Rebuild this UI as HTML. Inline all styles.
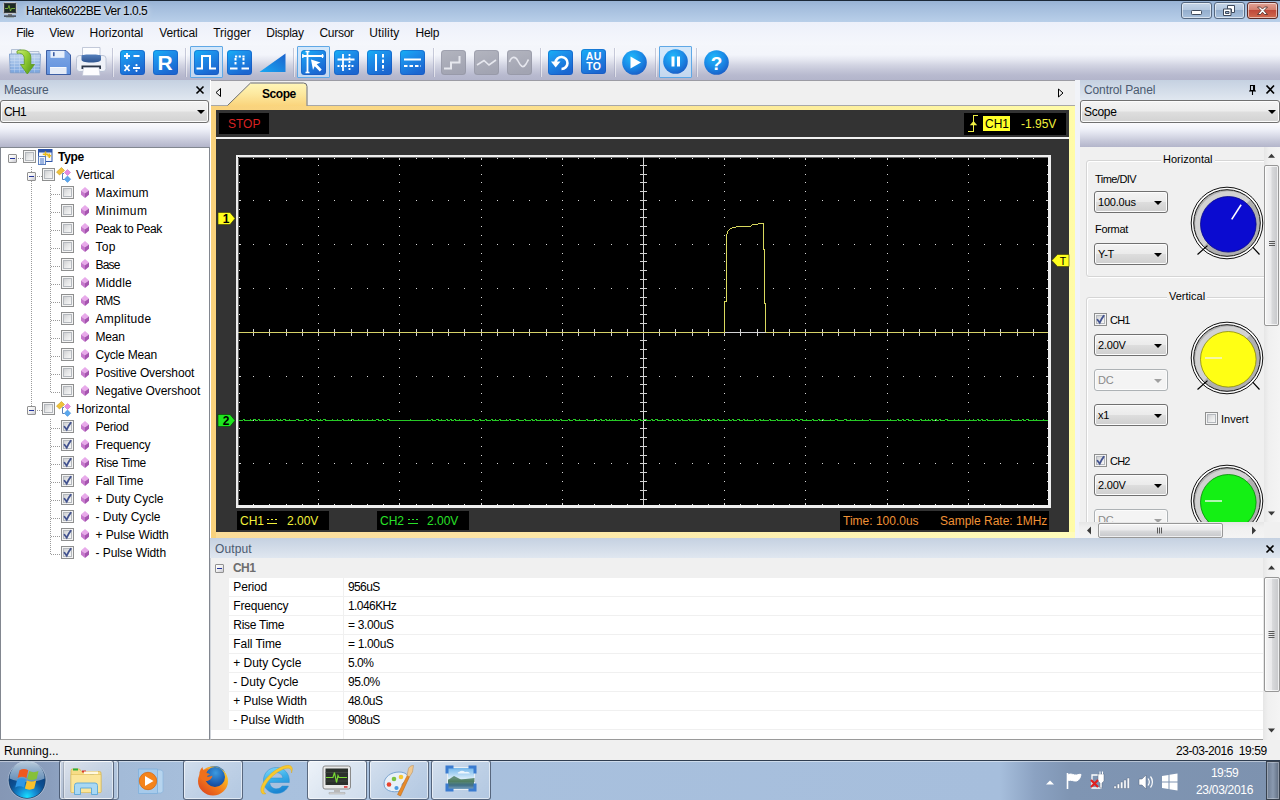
<!DOCTYPE html>
<html lang="en">
<head>
<meta charset="utf-8">
<title>Hantek6022BE Ver 1.0.5</title>
<style>
*{box-sizing:border-box;margin:0;padding:0}
html,body{width:1280px;height:800px;overflow:hidden;background:#f0f0f0}
body{font-family:"Liberation Sans",sans-serif;font-size:12px;color:#000;position:relative}
.abs{position:absolute}
svg{position:absolute;overflow:visible}
/* title bar */
#titlebar{left:0;top:0;width:1280px;height:22px;background:linear-gradient(#98b3d5 0,#a2bcdc 25%,#b9cfe9 100%);border-top:1px solid #1b2838}
#title{left:26px;top:4px;letter-spacing:-0.491px;font-size:12px;line-height:15px;color:#000;text-shadow:0 0 7px rgba(255,255,255,.9),0 0 4px rgba(255,255,255,.6);white-space:nowrap}
.wbtn{top:2px;height:17px;border:1px solid #55677f;border-radius:3px;box-shadow:inset 0 0 0 1px rgba(255,255,255,.55)}
/* menu */
#menubar{left:0;top:22px;width:1280px;height:23px;background:linear-gradient(#edf0fa,#f5f7fc)}
.mi{top:26px;font-size:12px;line-height:15px;white-space:nowrap;color:#0a0a0a}
/* toolbar */
#toolbar{left:0;top:45px;width:1280px;height:35px;background:linear-gradient(#f4f6fb 0,#f3f5fb 28%,#e4e6f0 43%,#d3d5e3 57%,#c4c6d8 72%,#b8bacf 86%,#b3b5cb 100%)}
.tsep{top:48px;width:2px;height:29px;border-left:1px solid rgba(160,164,190,.55);border-right:1px solid rgba(255,255,255,.55)}
.tsel{top:46px;width:33px;height:32px;border:1px solid #5fa8e6;background:rgba(200,225,250,.75);border-radius:1px}
/* panels */
.phead{height:20px;background:linear-gradient(#c5d1e1,#e0e7f0);color:#4b5a70;font-size:12px;line-height:20px;padding-left:4px;white-space:nowrap}
.combo{height:23px;border:1px solid #707070;border-radius:3px;background:linear-gradient(#f4f4f4 0,#ececec 48%,#dedede 52%,#d2d2d2 100%);box-shadow:inset 0 0 0 1px #fcfcfc;font-size:12px;line-height:22px;padding-left:3px}
.combo:after{content:"";position:absolute;right:3px;top:9px;border:4px solid transparent;border-top:4px solid #000;border-bottom:0}
.gstrip{height:24px;background:linear-gradient(#fbfbfe 0,#f0f2f9 25%,#dcdeea 50%,#c6c8d9 75%,#b3b5ca 100%)}
</style>
</head>
<body>
<svg width="0" height="0" style="left:0;top:0">
<defs>
<linearGradient id="gb" x1="0" y1="0" x2="0.55" y2="1"><stop offset="0" stop-color="#13b3f7"/><stop offset="0.35" stop-color="#1d92ec"/><stop offset="1" stop-color="#1b66d0"/></linearGradient>
<linearGradient id="gg" x1="0" y1="0" x2="0.3" y2="1"><stop offset="0" stop-color="#b3b5bf"/><stop offset="1" stop-color="#a2a4b2"/></linearGradient>
<radialGradient id="gorb" cx="0.4" cy="0.3" r="0.8"><stop offset="0" stop-color="#20b8fa"/><stop offset="0.5" stop-color="#1a8ce8"/><stop offset="1" stop-color="#1a55c0"/></radialGradient>
</defs>
</svg>
<!-- TITLE BAR -->
<div id="titlebar" class="abs"></div>
<svg class="abs" style="left:3px;top:2px" width="15" height="16" viewBox="0 0 15 16">
<rect x="0.5" y="0.5" width="13" height="11" rx="1" fill="#3a3f45" stroke="#c4c6c8"/>
<rect x="2" y="2" width="10" height="8" fill="#1d2a22"/>
<path d="M2 6.5 H5 L6 3.5 L7.5 9 L8.5 6.5 H12" stroke="#7ab536" stroke-width="0.9" fill="none"/>
<rect x="5" y="12" width="4" height="1.5" fill="#777"/>
<rect x="1" y="13.5" width="12" height="1.2" fill="#2a2d33"/>
<rect x="3" y="15" width="8" height="0.8" fill="#9aa"/>
</svg>
<div id="title" class="abs">Hantek6022BE Ver 1.0.5</div>
<div class="abs wbtn" style="left:1181px;width:31px;background:linear-gradient(#c5d5e8 0,#b2c6de 45%,#94aecd 50%,#a8c0dc 100%)"></div>
<div class="abs wbtn" style="left:1214px;width:31px;background:linear-gradient(#c5d5e8 0,#b2c6de 45%,#94aecd 50%,#a8c0dc 100%)"></div>
<div class="abs wbtn" style="left:1247px;width:31px;border-color:#5b2a26;background:linear-gradient(#e2a497 0,#d27f6e 45%,#c0493a 50%,#cf6a4f 100%)"></div>
<svg class="abs" style="left:1181px;top:2px" width="97" height="17" viewBox="0 0 97 17">
<rect x="10.500" y="8.500" width="10" height="4" rx="0.800" fill="#fff" stroke="#3f4a5c" stroke-width="1"/>
<g fill="#fff" stroke="#3f4a5c" stroke-width="1"><path d="M46.500 3.500h7v7h-3v-3.500h-4z"/><path d="M42.500 7h7.500v6.500h-7.500z M44.500 9.500v2h3.500v-2z" fill-rule="evenodd"/></g>
<path d="M76.500 5h3l2 2.100 2-2.100h3l-3.500 3.600 3.500 3.900h-3l-2-2.300-2 2.300h-3l3.500-3.900z" fill="#fff" stroke="#4a2520" stroke-width="0.800"/>
</svg>
<!-- MENU BAR -->
<div id="menubar" class="abs"></div>
<div class="abs mi" id="m1" style="left:16.25px;letter-spacing:-0.461px">File</div>
<div class="abs mi" id="m2" style="left:49.25px;letter-spacing:-0.324px">View</div>
<div class="abs mi" id="m3" style="left:89.50px;letter-spacing:-0.028px">Horizontal</div>
<div class="abs mi" id="m4" style="left:159.25px;letter-spacing:-0.139px">Vertical</div>
<div class="abs mi" id="m5" style="left:213.25px;letter-spacing:-0.011px">Trigger</div>
<div class="abs mi" id="m6" style="left:266.25px;letter-spacing:-0.266px">Display</div>
<div class="abs mi" id="m7" style="left:319.50px;letter-spacing:-0.294px">Cursor</div>
<div class="abs mi" id="m8" style="left:369.25px;letter-spacing:0.129px">Utility</div>
<div class="abs mi" id="m9" style="left:415.50px;letter-spacing:-0.234px">Help</div>
<!-- TOOLBAR -->
<div id="toolbar" class="abs"></div>
<div class="abs tsep" style="left:112px"></div>
<div class="abs tsep" style="left:185px"></div>
<div class="abs tsep" style="left:293px"></div>
<div class="abs tsep" style="left:433px"></div>
<div class="abs tsep" style="left:540px"></div>
<div class="abs tsep" style="left:614px"></div>
<div class="abs tsep" style="left:655px"></div>
<div class="abs tsep" style="left:696px"></div>
<div class="abs tsel" style="left:190px"></div>
<div class="abs tsel" style="left:297px"></div>
<div class="abs tsel" style="left:659px"></div>
<!-- toolbar icons -->
<svg class="abs" style="left:8px;top:46px" width="34" height="32" viewBox="0 0 34 32">
<defs><linearGradient id="fo1" x1="0" y1="0" x2="0" y2="1"><stop offset="0" stop-color="#c4d7f0"/><stop offset="1" stop-color="#7aa5de"/></linearGradient>
<linearGradient id="ar1" x1="0" y1="0" x2="1" y2="0.6"><stop offset="0" stop-color="#d2ee7a"/><stop offset="0.5" stop-color="#96d036"/><stop offset="1" stop-color="#5c9e1a"/></linearGradient></defs>
<path d="M3.500 3.500h9.500l1.500 2h16.500v4h-27.500z" fill="#e6edf7" stroke="#a4b4cc" stroke-width="0.800"/>
<path d="M1.500 8h31l-0.800 18.800h-29.400z" fill="url(#fo1)" stroke="#7d9dcb" stroke-width="0.900"/>
<path d="M2 11.500h30M2 14.500h30M2 17.500h30M2 20.500h30M2 23.500h30M6.500 8.500v18M11.500 8.500v18M16.500 8.500v18M21.500 8.500v18M26.500 8.500v18" stroke="#dce8f8" stroke-width="0.500" opacity="0.650"/>
<path d="M9 5c7-2.600 13.500-0.500 13.800 6v7.500h3.700l-7.200 9.500-6.800-9.500h3.800v-6c0-4-3-6-7.300-5.200z" fill="url(#ar1)" stroke="#5f9a20" stroke-width="0.800"/>
</svg>
<svg class="abs" style="left:45px;top:49px" width="27" height="27" viewBox="0 0 27 27">
<defs><linearGradient id="sv1" x1="0" y1="0" x2="0" y2="1"><stop offset="0" stop-color="#7fa8e6"/><stop offset="1" stop-color="#5f8fdc"/></linearGradient></defs>
<path d="M1.500 1.500h19.500l4.500 4.500v19.500h-24z" fill="url(#sv1)" stroke="#3c5ea4" stroke-width="1"/>
<rect x="5.500" y="1.800" width="14" height="7" fill="#e8f0fb"/>
<rect x="8" y="3.200" width="1.600" height="4" fill="#3c5ea4"/>
<rect x="5" y="18" width="16.500" height="7" fill="#f5f8fd"/>
<path d="M5 20h16.500M5 22h16.500M5 24h16.500" stroke="#c9d5ea" stroke-width="0.7"/>
</svg>
<svg class="abs" style="left:75px;top:46px" width="33" height="31" viewBox="0 0 33 31">
<defs><linearGradient id="pr1" x1="0" y1="0" x2="0" y2="1"><stop offset="0" stop-color="#5580bd"/><stop offset="1" stop-color="#2f5590"/></linearGradient></defs>
<rect x="1.500" y="9.500" width="29.500" height="16" rx="3" fill="#eef1f8" stroke="#b7bfd2" stroke-width="0.900"/>
<path d="M7.500 1.500h17.500v10h-17.500z" fill="#fcfdff" stroke="#b4bccf" stroke-width="0.800"/>
<path d="M6.500 10c0-1 2-1.500 9.500-1.500s10 0.500 10 1.500v3.500c0 2-3 3-9.800 3s-9.700-1-9.700-3z" fill="url(#pr1)"/>
<path d="M6.500 19.500h19.500v3.500h-19.500z" fill="#2c3648"/>
<path d="M8.500 21.500h15.500l1 8h-17.500z" fill="#fdfdff" stroke="#c0c6d6" stroke-width="0.600"/>
</svg>
<!-- calc -->
<svg class="abs" style="left:120px;top:49.500px" width="25" height="25" viewBox="0 0 25 25">
<rect x="0" y="0" width="25" height="25" rx="3.500" fill="url(#gb)"/><rect x="0.500" y="0.500" width="24" height="24" rx="3" fill="none" stroke="#1750b4" stroke-opacity="0.45"/>
<path d="M4 6h6M7 3v6M13.500 6h6M4.500 15l5 6M9.500 15l-5 6M13 18h7" stroke="#fff" stroke-width="1.800" fill="none"/><circle cx="16.500" cy="15.200" r="1.100" fill="#fff"/><circle cx="16.500" cy="20.800" r="1.100" fill="#fff"/>
</svg>
<!-- R -->
<svg class="abs" style="left:153px;top:49.500px" width="25" height="25" viewBox="0 0 25 25">
<rect width="25" height="25" rx="3.500" fill="url(#gb)"/><rect x="0.500" y="0.500" width="24" height="24" rx="3" fill="none" stroke="#1750b4" stroke-opacity="0.45"/>
<text x="12" y="20.300" text-anchor="middle" font-family="Liberation Sans,sans-serif" font-weight="bold" font-size="21" fill="#fff">R</text>
</svg>
<!-- pulse -->
<svg class="abs" style="left:194px;top:49.500px" width="25" height="25" viewBox="0 0 25 25">
<rect width="25" height="25" rx="3.500" fill="url(#gb)"/><rect x="0.500" y="0.500" width="24" height="24" rx="3" fill="none" stroke="#1750b4" stroke-opacity="0.45"/>
<path d="M2.500 18.500h5.500v-12.500h8v12.500h6" stroke="#fff" stroke-width="2" fill="none"/>
</svg>
<!-- dotted pulse -->
<svg class="abs" style="left:227px;top:49.500px" width="25" height="25" viewBox="0 0 25 25">
<rect width="25" height="25" rx="3.500" fill="url(#gb)"/><rect x="0.500" y="0.500" width="24" height="24" rx="3" fill="none" stroke="#1750b4" stroke-opacity="0.45"/>
<path d="M8 6.500h10" stroke="#fff" stroke-width="2" stroke-dasharray="2.200 1.500" fill="none"/>
<path d="M8.500 8v8M16.500 8v8" stroke="#fff" stroke-width="2" stroke-dasharray="2.500 1.500" fill="none"/>
<path d="M3 18.500h7.500M14.500 18.500h7.500" stroke="#fff" stroke-width="2" fill="none"/>
</svg>
<!-- triangle -->
<svg class="abs" style="left:259px;top:49.500px" width="28" height="25" viewBox="0 0 28 25">
<defs><linearGradient id="tr1" x1="0" y1="1" x2="1" y2="0"><stop offset="0" stop-color="#18a8f4"/><stop offset="1" stop-color="#1b62cc"/></linearGradient></defs>
<path d="M0.500 22l26-18.500v18.500z" fill="url(#tr1)"/>
</svg>
<!-- cursor -->
<svg class="abs" style="left:301px;top:49.500px" width="25" height="25" viewBox="0 0 25 25">
<rect width="25" height="25" rx="3.500" fill="url(#gb)"/><rect x="0.500" y="0.500" width="24" height="24" rx="3" fill="none" stroke="#1750b4" stroke-opacity="0.45"/>
<path d="M6.500 1.500v21M1.500 6h21" stroke="#fff" stroke-width="1.800" fill="none"/><path d="M4.500 1.500h4M4.500 22.500h4M21.500 4v4M1.800 4v4" stroke="#fff" stroke-width="1.300"/>
<path d="M10 9.500l9.500 3-3.800 1.800 5 5.200-1.900 1.900-5.100-5.200-1.700 3.800z" fill="#fff"/>
</svg>
<!-- grid -->
<svg class="abs" style="left:334px;top:49.500px" width="25" height="25" viewBox="0 0 25 25">
<rect width="25" height="25" rx="3.500" fill="url(#gb)"/><rect x="0.500" y="0.500" width="24" height="24" rx="3" fill="none" stroke="#1750b4" stroke-opacity="0.45"/>
<path d="M9 4v17M3.500 9.500h17" stroke="#fff" stroke-width="1.800" fill="none"/>
<path d="M15.500 4v17M3.500 16h17" stroke="#fff" stroke-width="1.800" stroke-dasharray="2 1.500" fill="none"/>
</svg>
<!-- vertical cursors -->
<svg class="abs" style="left:367px;top:49.500px" width="25" height="25" viewBox="0 0 25 25">
<rect width="25" height="25" rx="3.500" fill="url(#gb)"/><rect x="0.500" y="0.500" width="24" height="24" rx="3" fill="none" stroke="#1750b4" stroke-opacity="0.45"/>
<path d="M9 4v17" stroke="#fff" stroke-width="2" fill="none"/>
<path d="M16 4v17" stroke="#fff" stroke-width="2" stroke-dasharray="3.500 2" fill="none"/>
</svg>
<!-- horizontal cursors -->
<svg class="abs" style="left:400px;top:49.500px" width="25" height="25" viewBox="0 0 25 25">
<rect width="25" height="25" rx="3.500" fill="url(#gb)"/><rect x="0.500" y="0.500" width="24" height="24" rx="3" fill="none" stroke="#1750b4" stroke-opacity="0.45"/>
<path d="M4 9.500h17" stroke="#fff" stroke-width="2" fill="none"/>
<path d="M4 16h17" stroke="#fff" stroke-width="2" stroke-dasharray="3.500 2" fill="none"/>
</svg>
<!-- gray step -->
<svg class="abs" style="left:441px;top:49.500px" width="25" height="25" viewBox="0 0 25 25">
<rect width="25" height="25" rx="3.500" fill="url(#gg)"/><rect x="0.500" y="0.500" width="24" height="24" rx="3" fill="none" stroke="#8d8fa0" stroke-opacity="0.5"/>
<path d="M3 18.500h7v-6h8.500v-6.500" stroke="#e6e7ee" stroke-width="2" fill="none"/>
</svg>
<svg class="abs" style="left:474px;top:49.500px" width="25" height="25" viewBox="0 0 25 25">
<rect width="25" height="25" rx="3.500" fill="url(#gg)"/><rect x="0.500" y="0.500" width="24" height="24" rx="3" fill="none" stroke="#8d8fa0" stroke-opacity="0.5"/>
<path d="M3 15l7-4.500 5 4.500 7-5" stroke="#e6e7ee" stroke-width="1.600" fill="none"/>
</svg>
<svg class="abs" style="left:507px;top:49.500px" width="25" height="25" viewBox="0 0 25 25">
<rect width="25" height="25" rx="3.500" fill="url(#gg)"/><rect x="0.500" y="0.500" width="24" height="24" rx="3" fill="none" stroke="#8d8fa0" stroke-opacity="0.5"/>
<path d="M2.500 12c2-6 6-6 8.500-1s5 8 8 3c1-1.500 1.500-3 2.500-4.500" stroke="#e6e7ee" stroke-width="1.600" fill="none"/>
</svg>
<!-- reset -->
<svg class="abs" style="left:548px;top:49.500px" width="25" height="25" viewBox="0 0 25 25">
<rect width="25" height="25" rx="3.500" fill="url(#gb)"/><rect x="0.500" y="0.500" width="24" height="24" rx="3" fill="none" stroke="#1750b4" stroke-opacity="0.45"/>
<path d="M7.500 12.500a6 6 0 1 1 6 6.500" stroke="#fff" stroke-width="2.600" fill="none"/><path d="M3 11.500h9.500l-4.800 6z" fill="#fff"/>
</svg>
<!-- AUTO -->
<svg class="abs" style="left:581px;top:49px" width="25" height="25" viewBox="0 0 25 25">
<rect width="25" height="25" rx="3.500" fill="url(#gb)"/><rect x="0.500" y="0.500" width="24" height="24" rx="3" fill="none" stroke="#1750b4" stroke-opacity="0.45"/>
<text x="12.800" y="11.200" text-anchor="middle" font-family="Liberation Sans,sans-serif" font-weight="bold" font-size="10.500" fill="#fff" letter-spacing="0.400">AU</text>
<text x="12.800" y="21" text-anchor="middle" font-family="Liberation Sans,sans-serif" font-weight="bold" font-size="10.500" fill="#fff" letter-spacing="0.400">TO</text>
</svg>
<!-- play -->
<svg class="abs" style="left:622px;top:49.500px" width="25" height="25" viewBox="0 0 25 25">
<circle cx="12.500" cy="12.500" r="12.300" fill="url(#gorb)"/><path d="M8.500 6.500l10.500 6-10.500 6z" fill="#fff"/>
</svg>
<!-- pause -->
<svg class="abs" style="left:663px;top:49px" width="25" height="25" viewBox="0 0 25 25">
<circle cx="12.500" cy="12.500" r="12.300" fill="url(#gorb)"/><path d="M8.500 7.500h3v10h-3zM14 7.500h3v10h-3z" fill="#fff"/>
</svg>
<!-- help -->
<svg class="abs" style="left:704px;top:49.500px" width="25" height="25" viewBox="0 0 25 25">
<circle cx="12.500" cy="12.500" r="12.300" fill="url(#gorb)"/>
<text x="12.500" y="19.500" text-anchor="middle" font-family="Liberation Sans,sans-serif" font-weight="bold" font-size="19" fill="#fff">?</text>
</svg>
<style>
.tl{font-size:12px;line-height:16px;white-space:nowrap;color:#000}
.xb{width:9px;height:9px;border:1px solid #919191;border-radius:1px;background:linear-gradient(135deg,#fff 0,#f0f0f0 50%,#c8c8d0 100%)}
.xb:after{content:"";position:absolute;left:1px;top:3px;width:5px;height:1px;background:#22339a}
.cb{width:13px;height:13px;border:1px solid #8e8f8f;background:#f4f4f4;padding:1px}
.cb:before{content:"";display:block;box-sizing:border-box;width:9px;height:9px;border:1px solid #b4b8bd;background:linear-gradient(135deg,#cfd0d2 0,#e4e5e6 45%,#f8f8f8 100%)}

</style>

<!-- LEFT PANEL -->
<div class="abs phead" style="left:0;top:80px;width:210px;letter-spacing:-0.341px">Measure</div>
<svg class="abs" style="left:195px;top:85px" width="10" height="10" viewBox="0 0 10 10"><path d="M1.500 1.500l7 7M8.500 1.500l-7 7" stroke="#000" stroke-width="1.600"/></svg>
<div class="abs combo" style="left:0;top:100px;width:209px;letter-spacing:-0.7px">CH1</div>
<div class="abs gstrip" style="left:0;top:123px;width:210px"></div>
<div class="abs" style="left:0;top:147px;width:210px;height:593px;background:#fff;border:1px solid #828790;border-bottom-color:#a0a0a0"></div>
<svg class="abs" style="left:0;top:0" width="210" height="740" viewBox="0 0 210 740" shape-rendering="crispEdges"><path d="M31.5 167V406" stroke="#9a9a9a" stroke-width="1" stroke-dasharray="1 1"/><path d="M50.5 185V393" stroke="#9a9a9a" stroke-width="1" stroke-dasharray="1 1"/><path d="M50.5 419V555" stroke="#9a9a9a" stroke-width="1" stroke-dasharray="1 1"/><path d="M18 158.5H23" stroke="#9a9a9a" stroke-width="1" stroke-dasharray="1 1"/><path d="M37 176.5H42" stroke="#9a9a9a" stroke-width="1" stroke-dasharray="1 1"/><path d="M51 194.5H61" stroke="#9a9a9a" stroke-width="1" stroke-dasharray="1 1"/><path d="M51 212.5H61" stroke="#9a9a9a" stroke-width="1" stroke-dasharray="1 1"/><path d="M51 230.5H61" stroke="#9a9a9a" stroke-width="1" stroke-dasharray="1 1"/><path d="M51 248.5H61" stroke="#9a9a9a" stroke-width="1" stroke-dasharray="1 1"/><path d="M51 266.5H61" stroke="#9a9a9a" stroke-width="1" stroke-dasharray="1 1"/><path d="M51 284.5H61" stroke="#9a9a9a" stroke-width="1" stroke-dasharray="1 1"/><path d="M51 302.5H61" stroke="#9a9a9a" stroke-width="1" stroke-dasharray="1 1"/><path d="M51 320.5H61" stroke="#9a9a9a" stroke-width="1" stroke-dasharray="1 1"/><path d="M51 338.5H61" stroke="#9a9a9a" stroke-width="1" stroke-dasharray="1 1"/><path d="M51 356.5H61" stroke="#9a9a9a" stroke-width="1" stroke-dasharray="1 1"/><path d="M51 374.5H61" stroke="#9a9a9a" stroke-width="1" stroke-dasharray="1 1"/><path d="M51 392.5H61" stroke="#9a9a9a" stroke-width="1" stroke-dasharray="1 1"/><path d="M37 410.5H42" stroke="#9a9a9a" stroke-width="1" stroke-dasharray="1 1"/><path d="M51 428.5H61" stroke="#9a9a9a" stroke-width="1" stroke-dasharray="1 1"/><path d="M51 446.5H61" stroke="#9a9a9a" stroke-width="1" stroke-dasharray="1 1"/><path d="M51 464.5H61" stroke="#9a9a9a" stroke-width="1" stroke-dasharray="1 1"/><path d="M51 482.5H61" stroke="#9a9a9a" stroke-width="1" stroke-dasharray="1 1"/><path d="M51 500.5H61" stroke="#9a9a9a" stroke-width="1" stroke-dasharray="1 1"/><path d="M51 518.5H61" stroke="#9a9a9a" stroke-width="1" stroke-dasharray="1 1"/><path d="M51 536.5H61" stroke="#9a9a9a" stroke-width="1" stroke-dasharray="1 1"/><path d="M51 554.5H61" stroke="#9a9a9a" stroke-width="1" stroke-dasharray="1 1"/></svg>
<div class="abs xb" style="left:8px;top:154px"></div>
<div class="abs cb" style="left:23px;top:150px"></div>
<svg class="abs" style="left:37px;top:149px" width="16" height="16" viewBox="0 0 16 16"><rect x="1.500" y="0.500" width="13.500" height="12" fill="#f4f6fb" stroke="#2f55a8" stroke-width="1"/><rect x="1.500" y="0.500" width="13.500" height="3" fill="#2f55a8"/><path d="M8.500 2.500v5.500M5.800 5.200h5.500M12.300 4.500v4.500M10.300 6.700h4" stroke="#e9b818" stroke-width="1.500"/><rect x="1.500" y="7.500" width="7" height="8" fill="#eef3fb" stroke="#5b7fc0" stroke-width="1"/><path d="M3 10h4M3 12h4M3 14h4" stroke="#4a76c8" stroke-width="1"/></svg>
<div class="abs tl" style="left:58px;top:149px;font-weight:bold;letter-spacing:-0.281px">Type</div>
<div class="abs xb" style="left:27px;top:172px"></div>
<div class="abs cb" style="left:42px;top:168px"></div>
<svg class="abs" style="left:56px;top:167px" width="16" height="16" viewBox="0 0 16 16"><path d="M0.500 5L5.500 0.500 8.500 3.500 3.500 8z" fill="#f0c23a" stroke="#c99a1a" stroke-width="0.600"/><path d="M8 6.500h-1.500v6h2" fill="none" stroke="#5a7fb5" stroke-width="1"/><path d="M11.500 2.500l3 3-3 3-3-3z" fill="#e68be0" stroke="#c060c0" stroke-width="0.500"/><path d="M11.500 9l3.200 3.200-3.200 3.200-3.200-3.200z" fill="#5aa8ee" stroke="#2f7fd0" stroke-width="0.500"/></svg>
<div class="abs tl" style="left:76px;top:167px;letter-spacing:-0.132px">Vertical</div>
<div class="abs cb" style="left:61px;top:186px"></div>
<svg class="abs" style="left:81px;top:187px" width="8" height="11" viewBox="0 0 8 11"><path d="M4 0L8 3.500 4 6.200 0 3.500z" fill="#e8aaea"/><path d="M0 3.500L4 6.200V11L0 7.800z" fill="#c678cc"/><path d="M8 3.500L4 6.200V11L8 7.800z" fill="#a655b0"/></svg>
<div class="abs tl" style="left:95.500px;top:185px;letter-spacing:0.183px">Maximum</div>
<div class="abs cb" style="left:61px;top:204px"></div>
<svg class="abs" style="left:81px;top:205px" width="8" height="11" viewBox="0 0 8 11"><path d="M4 0L8 3.500 4 6.200 0 3.500z" fill="#e8aaea"/><path d="M0 3.500L4 6.200V11L0 7.800z" fill="#c678cc"/><path d="M8 3.500L4 6.200V11L8 7.800z" fill="#a655b0"/></svg>
<div class="abs tl" style="left:95.500px;top:203px;letter-spacing:0.475px">Minimum</div>
<div class="abs cb" style="left:61px;top:222px"></div>
<svg class="abs" style="left:81px;top:223px" width="8" height="11" viewBox="0 0 8 11"><path d="M4 0L8 3.500 4 6.200 0 3.500z" fill="#e8aaea"/><path d="M0 3.500L4 6.200V11L0 7.800z" fill="#c678cc"/><path d="M8 3.500L4 6.200V11L8 7.800z" fill="#a655b0"/></svg>
<div class="abs tl" style="left:95.500px;top:221px;letter-spacing:-0.424px">Peak to Peak</div>
<div class="abs cb" style="left:61px;top:240px"></div>
<svg class="abs" style="left:81px;top:241px" width="8" height="11" viewBox="0 0 8 11"><path d="M4 0L8 3.500 4 6.200 0 3.500z" fill="#e8aaea"/><path d="M0 3.500L4 6.200V11L0 7.800z" fill="#c678cc"/><path d="M8 3.500L4 6.200V11L8 7.800z" fill="#a655b0"/></svg>
<div class="abs tl" style="left:95.500px;top:239px;letter-spacing:0.28px">Top</div>
<div class="abs cb" style="left:61px;top:258px"></div>
<svg class="abs" style="left:81px;top:259px" width="8" height="11" viewBox="0 0 8 11"><path d="M4 0L8 3.500 4 6.200 0 3.500z" fill="#e8aaea"/><path d="M0 3.500L4 6.200V11L0 7.800z" fill="#c678cc"/><path d="M8 3.500L4 6.200V11L8 7.800z" fill="#a655b0"/></svg>
<div class="abs tl" style="left:95.500px;top:257px;letter-spacing:-0.84px">Base</div>
<div class="abs cb" style="left:61px;top:276px"></div>
<svg class="abs" style="left:81px;top:277px" width="8" height="11" viewBox="0 0 8 11"><path d="M4 0L8 3.500 4 6.200 0 3.500z" fill="#e8aaea"/><path d="M0 3.500L4 6.200V11L0 7.800z" fill="#c678cc"/><path d="M8 3.500L4 6.200V11L8 7.800z" fill="#a655b0"/></svg>
<div class="abs tl" style="left:95.500px;top:275px;letter-spacing:0.173px">Middle</div>
<div class="abs cb" style="left:61px;top:294px"></div>
<svg class="abs" style="left:81px;top:295px" width="8" height="11" viewBox="0 0 8 11"><path d="M4 0L8 3.500 4 6.200 0 3.500z" fill="#e8aaea"/><path d="M0 3.500L4 6.200V11L0 7.800z" fill="#c678cc"/><path d="M8 3.500L4 6.200V11L8 7.800z" fill="#a655b0"/></svg>
<div class="abs tl" style="left:95.500px;top:293px;letter-spacing:-0.891px">RMS</div>
<div class="abs cb" style="left:61px;top:312px"></div>
<svg class="abs" style="left:81px;top:313px" width="8" height="11" viewBox="0 0 8 11"><path d="M4 0L8 3.500 4 6.200 0 3.500z" fill="#e8aaea"/><path d="M0 3.500L4 6.200V11L0 7.800z" fill="#c678cc"/><path d="M8 3.500L4 6.200V11L8 7.800z" fill="#a655b0"/></svg>
<div class="abs tl" style="left:95.500px;top:311px;letter-spacing:0.281px">Amplitude</div>
<div class="abs cb" style="left:61px;top:330px"></div>
<svg class="abs" style="left:81px;top:331px" width="8" height="11" viewBox="0 0 8 11"><path d="M4 0L8 3.500 4 6.200 0 3.500z" fill="#e8aaea"/><path d="M0 3.500L4 6.200V11L0 7.800z" fill="#c678cc"/><path d="M8 3.500L4 6.200V11L8 7.800z" fill="#a655b0"/></svg>
<div class="abs tl" style="left:95.500px;top:329px;letter-spacing:-0.183px">Mean</div>
<div class="abs cb" style="left:61px;top:348px"></div>
<svg class="abs" style="left:81px;top:349px" width="8" height="11" viewBox="0 0 8 11"><path d="M4 0L8 3.500 4 6.200 0 3.500z" fill="#e8aaea"/><path d="M0 3.500L4 6.200V11L0 7.800z" fill="#c678cc"/><path d="M8 3.500L4 6.200V11L8 7.800z" fill="#a655b0"/></svg>
<div class="abs tl" style="left:95.500px;top:347px;letter-spacing:-0.196px">Cycle Mean</div>
<div class="abs cb" style="left:61px;top:366px"></div>
<svg class="abs" style="left:81px;top:367px" width="8" height="11" viewBox="0 0 8 11"><path d="M4 0L8 3.500 4 6.200 0 3.500z" fill="#e8aaea"/><path d="M0 3.500L4 6.200V11L0 7.800z" fill="#c678cc"/><path d="M8 3.500L4 6.200V11L8 7.800z" fill="#a655b0"/></svg>
<div class="abs tl" style="left:95.500px;top:365px;letter-spacing:-0.107px">Positive Overshoot</div>
<div class="abs cb" style="left:61px;top:384px"></div>
<svg class="abs" style="left:81px;top:385px" width="8" height="11" viewBox="0 0 8 11"><path d="M4 0L8 3.500 4 6.200 0 3.500z" fill="#e8aaea"/><path d="M0 3.500L4 6.200V11L0 7.800z" fill="#c678cc"/><path d="M8 3.500L4 6.200V11L8 7.800z" fill="#a655b0"/></svg>
<div class="abs tl" style="left:95.500px;top:383px;letter-spacing:-0.076px">Negative Overshoot</div>
<div class="abs xb" style="left:27px;top:406px"></div>
<div class="abs cb" style="left:42px;top:402px"></div>
<svg class="abs" style="left:56px;top:401px" width="16" height="16" viewBox="0 0 16 16"><path d="M0.500 5L5.500 0.500 8.500 3.500 3.500 8z" fill="#f0c23a" stroke="#c99a1a" stroke-width="0.600"/><path d="M8 6.500h-1.500v6h2" fill="none" stroke="#5a7fb5" stroke-width="1"/><path d="M11.500 2.500l3 3-3 3-3-3z" fill="#e68be0" stroke="#c060c0" stroke-width="0.500"/><path d="M11.500 9l3.200 3.200-3.200 3.200-3.200-3.200z" fill="#5aa8ee" stroke="#2f7fd0" stroke-width="0.500"/></svg>
<div class="abs tl" style="left:76px;top:401px;letter-spacing:0.017px">Horizontal</div>
<div class="abs cb ck" style="left:61px;top:420px"></div>
<svg class="abs" style="left:61px;top:420px" width="13" height="13" viewBox="0 0 13 13"><path d="M3.500 6.800L5.700 9.700Q7.400 5.500 9.700 2.800" stroke="#43538f" stroke-width="1.800" fill="none" stroke-linecap="round"/></svg>
<svg class="abs" style="left:81px;top:421px" width="8" height="11" viewBox="0 0 8 11"><path d="M4 0L8 3.500 4 6.200 0 3.500z" fill="#e8aaea"/><path d="M0 3.500L4 6.200V11L0 7.800z" fill="#c678cc"/><path d="M8 3.500L4 6.200V11L8 7.800z" fill="#a655b0"/></svg>
<div class="abs tl" style="left:95.500px;top:419px;letter-spacing:-0.248px">Period</div>
<div class="abs cb ck" style="left:61px;top:438px"></div>
<svg class="abs" style="left:61px;top:438px" width="13" height="13" viewBox="0 0 13 13"><path d="M3.500 6.800L5.700 9.700Q7.400 5.500 9.700 2.800" stroke="#43538f" stroke-width="1.800" fill="none" stroke-linecap="round"/></svg>
<svg class="abs" style="left:81px;top:439px" width="8" height="11" viewBox="0 0 8 11"><path d="M4 0L8 3.500 4 6.200 0 3.500z" fill="#e8aaea"/><path d="M0 3.500L4 6.200V11L0 7.800z" fill="#c678cc"/><path d="M8 3.500L4 6.200V11L8 7.800z" fill="#a655b0"/></svg>
<div class="abs tl" style="left:95.500px;top:437px;letter-spacing:-0.2px">Frequency</div>
<div class="abs cb ck" style="left:61px;top:456px"></div>
<svg class="abs" style="left:61px;top:456px" width="13" height="13" viewBox="0 0 13 13"><path d="M3.500 6.800L5.700 9.700Q7.400 5.500 9.700 2.800" stroke="#43538f" stroke-width="1.800" fill="none" stroke-linecap="round"/></svg>
<svg class="abs" style="left:81px;top:457px" width="8" height="11" viewBox="0 0 8 11"><path d="M4 0L8 3.500 4 6.200 0 3.500z" fill="#e8aaea"/><path d="M0 3.500L4 6.200V11L0 7.800z" fill="#c678cc"/><path d="M8 3.500L4 6.200V11L8 7.800z" fill="#a655b0"/></svg>
<div class="abs tl" style="left:95.500px;top:455px;letter-spacing:-0.327px">Rise Time</div>
<div class="abs cb ck" style="left:61px;top:474px"></div>
<svg class="abs" style="left:61px;top:474px" width="13" height="13" viewBox="0 0 13 13"><path d="M3.500 6.800L5.700 9.700Q7.400 5.500 9.700 2.800" stroke="#43538f" stroke-width="1.800" fill="none" stroke-linecap="round"/></svg>
<svg class="abs" style="left:81px;top:475px" width="8" height="11" viewBox="0 0 8 11"><path d="M4 0L8 3.500 4 6.200 0 3.500z" fill="#e8aaea"/><path d="M0 3.500L4 6.200V11L0 7.800z" fill="#c678cc"/><path d="M8 3.500L4 6.200V11L8 7.800z" fill="#a655b0"/></svg>
<div class="abs tl" style="left:95.500px;top:473px;letter-spacing:-0.099px">Fall Time</div>
<div class="abs cb ck" style="left:61px;top:492px"></div>
<svg class="abs" style="left:61px;top:492px" width="13" height="13" viewBox="0 0 13 13"><path d="M3.500 6.800L5.700 9.700Q7.400 5.500 9.700 2.800" stroke="#43538f" stroke-width="1.800" fill="none" stroke-linecap="round"/></svg>
<svg class="abs" style="left:81px;top:493px" width="8" height="11" viewBox="0 0 8 11"><path d="M4 0L8 3.500 4 6.200 0 3.500z" fill="#e8aaea"/><path d="M0 3.500L4 6.200V11L0 7.800z" fill="#c678cc"/><path d="M8 3.500L4 6.200V11L8 7.800z" fill="#a655b0"/></svg>
<div class="abs tl" style="left:95.500px;top:491px;letter-spacing:-0.038px">+ Duty Cycle</div>
<div class="abs cb ck" style="left:61px;top:510px"></div>
<svg class="abs" style="left:61px;top:510px" width="13" height="13" viewBox="0 0 13 13"><path d="M3.500 6.800L5.700 9.700Q7.400 5.500 9.700 2.800" stroke="#43538f" stroke-width="1.800" fill="none" stroke-linecap="round"/></svg>
<svg class="abs" style="left:81px;top:511px" width="8" height="11" viewBox="0 0 8 11"><path d="M4 0L8 3.500 4 6.200 0 3.500z" fill="#e8aaea"/><path d="M0 3.500L4 6.200V11L0 7.800z" fill="#c678cc"/><path d="M8 3.500L4 6.200V11L8 7.800z" fill="#a655b0"/></svg>
<div class="abs tl" style="left:95.500px;top:509px;letter-spacing:-0.029px">- Duty Cycle</div>
<div class="abs cb ck" style="left:61px;top:528px"></div>
<svg class="abs" style="left:61px;top:528px" width="13" height="13" viewBox="0 0 13 13"><path d="M3.500 6.800L5.700 9.700Q7.400 5.500 9.700 2.800" stroke="#43538f" stroke-width="1.800" fill="none" stroke-linecap="round"/></svg>
<svg class="abs" style="left:81px;top:529px" width="8" height="11" viewBox="0 0 8 11"><path d="M4 0L8 3.500 4 6.200 0 3.500z" fill="#e8aaea"/><path d="M0 3.500L4 6.200V11L0 7.800z" fill="#c678cc"/><path d="M8 3.500L4 6.200V11L8 7.800z" fill="#a655b0"/></svg>
<div class="abs tl" style="left:95.500px;top:527px;letter-spacing:-0.098px">+ Pulse Width</div>
<div class="abs cb ck" style="left:61px;top:546px"></div>
<svg class="abs" style="left:61px;top:546px" width="13" height="13" viewBox="0 0 13 13"><path d="M3.500 6.800L5.700 9.700Q7.400 5.500 9.700 2.800" stroke="#43538f" stroke-width="1.800" fill="none" stroke-linecap="round"/></svg>
<svg class="abs" style="left:81px;top:547px" width="8" height="11" viewBox="0 0 8 11"><path d="M4 0L8 3.500 4 6.200 0 3.500z" fill="#e8aaea"/><path d="M0 3.500L4 6.200V11L0 7.800z" fill="#c678cc"/><path d="M8 3.500L4 6.200V11L8 7.800z" fill="#a655b0"/></svg>
<div class="abs tl" style="left:95.500px;top:545px;letter-spacing:-0.066px">- Pulse Width</div>
<style>.sbox{background:#000;font-size:12px;line-height:23px;white-space:nowrap}</style>
<!-- CENTER -->
<div class="abs" style="left:210px;top:80px;width:1px;height:460px;background:#fff"></div>
<div class="abs" style="left:211px;top:80px;width:864px;height:26px;background:#f0f0f0;border-top:1px solid #9c9ca4;border-bottom:1px solid #a8a8a8"></div>
<div class="abs" style="left:211px;top:106px;width:864px;height:432px;background:linear-gradient(to right,#f9d27c 0,#fbdc8a 30%,#fdee9c 70%,#fffca8 100%)"></div>
<div class="abs" style="left:216px;top:532px;width:859px;height:6px;background:rgba(255,255,255,.22)"></div>
<svg class="abs" style="left:211px;top:80px" width="120" height="27" viewBox="0 0 120 27">
<defs><linearGradient id="tabg" x1="0" y1="0" x2="0" y2="1"><stop offset="0" stop-color="#fff6b8"/><stop offset="0.45" stop-color="#fde9a0"/><stop offset="1" stop-color="#fad47c"/></linearGradient></defs>
<path d="M16 26L39.500 3.500H92.500Q95.500 3.500 95.500 6.500V26z" fill="url(#tabg)"/>
<path d="M16.500 25.500L39.500 3H92.500Q96 3 96 6.500V25.500" fill="none" stroke="#6e6e6a" stroke-width="1"/>
<path d="M9.500 8.500v8l-4.500-4z" fill="none" stroke="#000" stroke-width="1"/>
</svg>
<div class="abs" style="left:262px;top:87px;font-weight:bold;font-size:12px;line-height:15px;letter-spacing:-0.45px">Scope</div>
<svg class="abs" style="left:1055px;top:86px" width="12" height="14" viewBox="0 0 12 14"><path d="M3.500 3v8l4.500-4z" fill="none" stroke="#000" stroke-width="1"/></svg>
<div class="abs" style="left:216px;top:110px;width:853px;height:422px;background:#333"></div>
<div class="abs" style="left:216px;top:137px;width:853px;height:2px;background:#f2f2f2"></div>
<div class="abs sbox" style="left:219px;top:113px;width:50px;height:21px;color:#d82222;padding-left:9px">STOP</div>
<div class="abs sbox" style="left:964px;top:113px;width:102px;height:22px"></div>
<svg class="abs" style="left:966px;top:114px" width="14" height="19" viewBox="0 0 14 19"><path d="M2 17.500h5.500v-16h4.500" fill="none" stroke="#f0f044" stroke-width="1.100" shape-rendering="crispEdges"/><path d="M7.500 7l-3.700 4.300h7.400z" fill="#f0f044"/></svg>
<div class="abs" style="left:983px;top:116px;width:27px;height:15px;background:#ffff28;color:#000;font-size:12px;line-height:17px;padding-left:2px">CH1</div>
<div class="abs" style="left:1021px;top:117px;color:#f0f03c;font-size:12px;line-height:15px;white-space:nowrap">-1.95V</div>
<div class="abs" style="left:236px;top:155px;width:815px;height:353px;background:#000"></div>
<svg class="abs" style="left:0;top:0" width="1280" height="540" viewBox="0 0 1280 540" shape-rendering="crispEdges"><path d="M239 165h1v1h-1zM239 174h1v1h-1zM239 182h1v1h-1zM239 191h1v1h-1zM239 200h1v1h-1zM239 209h1v1h-1zM239 217h1v1h-1zM239 226h1v1h-1zM239 235h1v1h-1zM239 244h1v1h-1zM239 253h1v1h-1zM239 261h1v1h-1zM239 270h1v1h-1zM239 279h1v1h-1zM239 288h1v1h-1zM239 297h1v1h-1zM239 305h1v1h-1zM239 314h1v1h-1zM239 323h1v1h-1zM239 332h1v1h-1zM239 340h1v1h-1zM239 349h1v1h-1zM239 358h1v1h-1zM239 367h1v1h-1zM239 376h1v1h-1zM239 384h1v1h-1zM239 393h1v1h-1zM239 402h1v1h-1zM239 411h1v1h-1zM239 420h1v1h-1zM239 428h1v1h-1zM239 437h1v1h-1zM239 446h1v1h-1zM239 455h1v1h-1zM239 463h1v1h-1zM239 472h1v1h-1zM239 481h1v1h-1zM239 490h1v1h-1zM239 499h1v1h-1zM240 200h1v1h-1zM240 244h1v1h-1zM240 288h1v1h-1zM240 332h1v1h-1zM240 376h1v1h-1zM240 420h1v1h-1zM240 463h1v1h-1zM253 158h1v1h-1zM253 200h1v1h-1zM253 244h1v1h-1zM253 288h1v1h-1zM253 376h1v1h-1zM253 420h1v1h-1zM253 463h1v1h-1zM253 504h1v1h-1zM269 158h1v1h-1zM269 200h1v1h-1zM269 244h1v1h-1zM269 288h1v1h-1zM269 376h1v1h-1zM269 420h1v1h-1zM269 463h1v1h-1zM269 504h1v1h-1zM286 158h1v1h-1zM286 200h1v1h-1zM286 244h1v1h-1zM286 288h1v1h-1zM286 376h1v1h-1zM286 420h1v1h-1zM286 463h1v1h-1zM286 504h1v1h-1zM302 158h1v1h-1zM302 200h1v1h-1zM302 244h1v1h-1zM302 288h1v1h-1zM302 376h1v1h-1zM302 420h1v1h-1zM302 463h1v1h-1zM302 504h1v1h-1zM318 158h1v1h-1zM318 159h1v1h-1zM318 165h1v1h-1zM318 174h1v1h-1zM318 182h1v1h-1zM318 191h1v1h-1zM318 200h1v1h-1zM318 209h1v1h-1zM318 217h1v1h-1zM318 226h1v1h-1zM318 235h1v1h-1zM318 244h1v1h-1zM318 253h1v1h-1zM318 261h1v1h-1zM318 270h1v1h-1zM318 279h1v1h-1zM318 288h1v1h-1zM318 297h1v1h-1zM318 305h1v1h-1zM318 314h1v1h-1zM318 323h1v1h-1zM318 332h1v1h-1zM318 340h1v1h-1zM318 349h1v1h-1zM318 358h1v1h-1zM318 367h1v1h-1zM318 376h1v1h-1zM318 384h1v1h-1zM318 393h1v1h-1zM318 402h1v1h-1zM318 411h1v1h-1zM318 420h1v1h-1zM318 428h1v1h-1zM318 437h1v1h-1zM318 446h1v1h-1zM318 455h1v1h-1zM318 463h1v1h-1zM318 472h1v1h-1zM318 481h1v1h-1zM318 490h1v1h-1zM318 499h1v1h-1zM318 503h1v1h-1zM318 504h1v1h-1zM334 158h1v1h-1zM334 200h1v1h-1zM334 244h1v1h-1zM334 288h1v1h-1zM334 376h1v1h-1zM334 420h1v1h-1zM334 463h1v1h-1zM334 504h1v1h-1zM351 158h1v1h-1zM351 200h1v1h-1zM351 244h1v1h-1zM351 288h1v1h-1zM351 376h1v1h-1zM351 420h1v1h-1zM351 463h1v1h-1zM351 504h1v1h-1zM367 158h1v1h-1zM367 200h1v1h-1zM367 244h1v1h-1zM367 288h1v1h-1zM367 376h1v1h-1zM367 420h1v1h-1zM367 463h1v1h-1zM367 504h1v1h-1zM383 158h1v1h-1zM383 200h1v1h-1zM383 244h1v1h-1zM383 288h1v1h-1zM383 376h1v1h-1zM383 420h1v1h-1zM383 463h1v1h-1zM383 504h1v1h-1zM399 158h1v1h-1zM399 159h1v1h-1zM399 165h1v1h-1zM399 174h1v1h-1zM399 182h1v1h-1zM399 191h1v1h-1zM399 200h1v1h-1zM399 209h1v1h-1zM399 217h1v1h-1zM399 226h1v1h-1zM399 235h1v1h-1zM399 244h1v1h-1zM399 253h1v1h-1zM399 261h1v1h-1zM399 270h1v1h-1zM399 279h1v1h-1zM399 288h1v1h-1zM399 297h1v1h-1zM399 305h1v1h-1zM399 314h1v1h-1zM399 323h1v1h-1zM399 332h1v1h-1zM399 340h1v1h-1zM399 349h1v1h-1zM399 358h1v1h-1zM399 367h1v1h-1zM399 376h1v1h-1zM399 384h1v1h-1zM399 393h1v1h-1zM399 402h1v1h-1zM399 411h1v1h-1zM399 420h1v1h-1zM399 428h1v1h-1zM399 437h1v1h-1zM399 446h1v1h-1zM399 455h1v1h-1zM399 463h1v1h-1zM399 472h1v1h-1zM399 481h1v1h-1zM399 490h1v1h-1zM399 499h1v1h-1zM399 503h1v1h-1zM399 504h1v1h-1zM416 158h1v1h-1zM416 200h1v1h-1zM416 244h1v1h-1zM416 288h1v1h-1zM416 376h1v1h-1zM416 420h1v1h-1zM416 463h1v1h-1zM416 504h1v1h-1zM432 158h1v1h-1zM432 200h1v1h-1zM432 244h1v1h-1zM432 288h1v1h-1zM432 376h1v1h-1zM432 420h1v1h-1zM432 463h1v1h-1zM432 504h1v1h-1zM448 158h1v1h-1zM448 200h1v1h-1zM448 244h1v1h-1zM448 288h1v1h-1zM448 376h1v1h-1zM448 420h1v1h-1zM448 463h1v1h-1zM448 504h1v1h-1zM464 158h1v1h-1zM464 200h1v1h-1zM464 244h1v1h-1zM464 288h1v1h-1zM464 376h1v1h-1zM464 420h1v1h-1zM464 463h1v1h-1zM464 504h1v1h-1zM481 158h1v1h-1zM481 159h1v1h-1zM481 165h1v1h-1zM481 174h1v1h-1zM481 182h1v1h-1zM481 191h1v1h-1zM481 200h1v1h-1zM481 209h1v1h-1zM481 217h1v1h-1zM481 226h1v1h-1zM481 235h1v1h-1zM481 244h1v1h-1zM481 253h1v1h-1zM481 261h1v1h-1zM481 270h1v1h-1zM481 279h1v1h-1zM481 288h1v1h-1zM481 297h1v1h-1zM481 305h1v1h-1zM481 314h1v1h-1zM481 323h1v1h-1zM481 332h1v1h-1zM481 340h1v1h-1zM481 349h1v1h-1zM481 358h1v1h-1zM481 367h1v1h-1zM481 376h1v1h-1zM481 384h1v1h-1zM481 393h1v1h-1zM481 402h1v1h-1zM481 411h1v1h-1zM481 420h1v1h-1zM481 428h1v1h-1zM481 437h1v1h-1zM481 446h1v1h-1zM481 455h1v1h-1zM481 463h1v1h-1zM481 472h1v1h-1zM481 481h1v1h-1zM481 490h1v1h-1zM481 499h1v1h-1zM481 503h1v1h-1zM481 504h1v1h-1zM497 158h1v1h-1zM497 200h1v1h-1zM497 244h1v1h-1zM497 288h1v1h-1zM497 376h1v1h-1zM497 420h1v1h-1zM497 463h1v1h-1zM497 504h1v1h-1zM513 158h1v1h-1zM513 200h1v1h-1zM513 244h1v1h-1zM513 288h1v1h-1zM513 376h1v1h-1zM513 420h1v1h-1zM513 463h1v1h-1zM513 504h1v1h-1zM529 158h1v1h-1zM529 200h1v1h-1zM529 244h1v1h-1zM529 288h1v1h-1zM529 376h1v1h-1zM529 420h1v1h-1zM529 463h1v1h-1zM529 504h1v1h-1zM546 158h1v1h-1zM546 200h1v1h-1zM546 244h1v1h-1zM546 288h1v1h-1zM546 376h1v1h-1zM546 420h1v1h-1zM546 463h1v1h-1zM546 504h1v1h-1zM562 158h1v1h-1zM562 159h1v1h-1zM562 165h1v1h-1zM562 174h1v1h-1zM562 182h1v1h-1zM562 191h1v1h-1zM562 200h1v1h-1zM562 209h1v1h-1zM562 217h1v1h-1zM562 226h1v1h-1zM562 235h1v1h-1zM562 244h1v1h-1zM562 253h1v1h-1zM562 261h1v1h-1zM562 270h1v1h-1zM562 279h1v1h-1zM562 288h1v1h-1zM562 297h1v1h-1zM562 305h1v1h-1zM562 314h1v1h-1zM562 323h1v1h-1zM562 332h1v1h-1zM562 340h1v1h-1zM562 349h1v1h-1zM562 358h1v1h-1zM562 367h1v1h-1zM562 376h1v1h-1zM562 384h1v1h-1zM562 393h1v1h-1zM562 402h1v1h-1zM562 411h1v1h-1zM562 420h1v1h-1zM562 428h1v1h-1zM562 437h1v1h-1zM562 446h1v1h-1zM562 455h1v1h-1zM562 463h1v1h-1zM562 472h1v1h-1zM562 481h1v1h-1zM562 490h1v1h-1zM562 499h1v1h-1zM562 503h1v1h-1zM562 504h1v1h-1zM578 158h1v1h-1zM578 200h1v1h-1zM578 244h1v1h-1zM578 288h1v1h-1zM578 376h1v1h-1zM578 420h1v1h-1zM578 463h1v1h-1zM578 504h1v1h-1zM594 158h1v1h-1zM594 200h1v1h-1zM594 244h1v1h-1zM594 288h1v1h-1zM594 376h1v1h-1zM594 420h1v1h-1zM594 463h1v1h-1zM594 504h1v1h-1zM611 158h1v1h-1zM611 200h1v1h-1zM611 244h1v1h-1zM611 288h1v1h-1zM611 376h1v1h-1zM611 420h1v1h-1zM611 463h1v1h-1zM611 504h1v1h-1zM627 158h1v1h-1zM627 200h1v1h-1zM627 244h1v1h-1zM627 288h1v1h-1zM627 376h1v1h-1zM627 420h1v1h-1zM627 463h1v1h-1zM627 504h1v1h-1zM643 158h1v1h-1zM643 159h1v1h-1zM643 200h1v1h-1zM643 244h1v1h-1zM643 288h1v1h-1zM643 376h1v1h-1zM643 420h1v1h-1zM643 463h1v1h-1zM643 503h1v1h-1zM643 504h1v1h-1zM659 158h1v1h-1zM659 200h1v1h-1zM659 244h1v1h-1zM659 288h1v1h-1zM659 376h1v1h-1zM659 420h1v1h-1zM659 463h1v1h-1zM659 504h1v1h-1zM675 158h1v1h-1zM675 200h1v1h-1zM675 244h1v1h-1zM675 288h1v1h-1zM675 376h1v1h-1zM675 420h1v1h-1zM675 463h1v1h-1zM675 504h1v1h-1zM692 158h1v1h-1zM692 200h1v1h-1zM692 244h1v1h-1zM692 288h1v1h-1zM692 376h1v1h-1zM692 420h1v1h-1zM692 463h1v1h-1zM692 504h1v1h-1zM708 158h1v1h-1zM708 200h1v1h-1zM708 244h1v1h-1zM708 288h1v1h-1zM708 376h1v1h-1zM708 420h1v1h-1zM708 463h1v1h-1zM708 504h1v1h-1zM724 158h1v1h-1zM724 159h1v1h-1zM724 165h1v1h-1zM724 174h1v1h-1zM724 182h1v1h-1zM724 191h1v1h-1zM724 200h1v1h-1zM724 209h1v1h-1zM724 217h1v1h-1zM724 226h1v1h-1zM724 235h1v1h-1zM724 244h1v1h-1zM724 253h1v1h-1zM724 261h1v1h-1zM724 270h1v1h-1zM724 279h1v1h-1zM724 288h1v1h-1zM724 297h1v1h-1zM724 305h1v1h-1zM724 314h1v1h-1zM724 323h1v1h-1zM724 332h1v1h-1zM724 340h1v1h-1zM724 349h1v1h-1zM724 358h1v1h-1zM724 367h1v1h-1zM724 376h1v1h-1zM724 384h1v1h-1zM724 393h1v1h-1zM724 402h1v1h-1zM724 411h1v1h-1zM724 420h1v1h-1zM724 428h1v1h-1zM724 437h1v1h-1zM724 446h1v1h-1zM724 455h1v1h-1zM724 463h1v1h-1zM724 472h1v1h-1zM724 481h1v1h-1zM724 490h1v1h-1zM724 499h1v1h-1zM724 503h1v1h-1zM724 504h1v1h-1zM740 158h1v1h-1zM740 200h1v1h-1zM740 244h1v1h-1zM740 288h1v1h-1zM740 376h1v1h-1zM740 420h1v1h-1zM740 463h1v1h-1zM740 504h1v1h-1zM757 158h1v1h-1zM757 200h1v1h-1zM757 244h1v1h-1zM757 288h1v1h-1zM757 376h1v1h-1zM757 420h1v1h-1zM757 463h1v1h-1zM757 504h1v1h-1zM773 158h1v1h-1zM773 200h1v1h-1zM773 244h1v1h-1zM773 288h1v1h-1zM773 376h1v1h-1zM773 420h1v1h-1zM773 463h1v1h-1zM773 504h1v1h-1zM789 158h1v1h-1zM789 200h1v1h-1zM789 244h1v1h-1zM789 288h1v1h-1zM789 376h1v1h-1zM789 420h1v1h-1zM789 463h1v1h-1zM789 504h1v1h-1zM805 158h1v1h-1zM805 159h1v1h-1zM805 165h1v1h-1zM805 174h1v1h-1zM805 182h1v1h-1zM805 191h1v1h-1zM805 200h1v1h-1zM805 209h1v1h-1zM805 217h1v1h-1zM805 226h1v1h-1zM805 235h1v1h-1zM805 244h1v1h-1zM805 253h1v1h-1zM805 261h1v1h-1zM805 270h1v1h-1zM805 279h1v1h-1zM805 288h1v1h-1zM805 297h1v1h-1zM805 305h1v1h-1zM805 314h1v1h-1zM805 323h1v1h-1zM805 332h1v1h-1zM805 340h1v1h-1zM805 349h1v1h-1zM805 358h1v1h-1zM805 367h1v1h-1zM805 376h1v1h-1zM805 384h1v1h-1zM805 393h1v1h-1zM805 402h1v1h-1zM805 411h1v1h-1zM805 420h1v1h-1zM805 428h1v1h-1zM805 437h1v1h-1zM805 446h1v1h-1zM805 455h1v1h-1zM805 463h1v1h-1zM805 472h1v1h-1zM805 481h1v1h-1zM805 490h1v1h-1zM805 499h1v1h-1zM805 503h1v1h-1zM805 504h1v1h-1zM822 158h1v1h-1zM822 200h1v1h-1zM822 244h1v1h-1zM822 288h1v1h-1zM822 376h1v1h-1zM822 420h1v1h-1zM822 463h1v1h-1zM822 504h1v1h-1zM838 158h1v1h-1zM838 200h1v1h-1zM838 244h1v1h-1zM838 288h1v1h-1zM838 376h1v1h-1zM838 420h1v1h-1zM838 463h1v1h-1zM838 504h1v1h-1zM854 158h1v1h-1zM854 200h1v1h-1zM854 244h1v1h-1zM854 288h1v1h-1zM854 376h1v1h-1zM854 420h1v1h-1zM854 463h1v1h-1zM854 504h1v1h-1zM870 158h1v1h-1zM870 200h1v1h-1zM870 244h1v1h-1zM870 288h1v1h-1zM870 376h1v1h-1zM870 420h1v1h-1zM870 463h1v1h-1zM870 504h1v1h-1zM887 158h1v1h-1zM887 159h1v1h-1zM887 165h1v1h-1zM887 174h1v1h-1zM887 182h1v1h-1zM887 191h1v1h-1zM887 200h1v1h-1zM887 209h1v1h-1zM887 217h1v1h-1zM887 226h1v1h-1zM887 235h1v1h-1zM887 244h1v1h-1zM887 253h1v1h-1zM887 261h1v1h-1zM887 270h1v1h-1zM887 279h1v1h-1zM887 288h1v1h-1zM887 297h1v1h-1zM887 305h1v1h-1zM887 314h1v1h-1zM887 323h1v1h-1zM887 332h1v1h-1zM887 340h1v1h-1zM887 349h1v1h-1zM887 358h1v1h-1zM887 367h1v1h-1zM887 376h1v1h-1zM887 384h1v1h-1zM887 393h1v1h-1zM887 402h1v1h-1zM887 411h1v1h-1zM887 420h1v1h-1zM887 428h1v1h-1zM887 437h1v1h-1zM887 446h1v1h-1zM887 455h1v1h-1zM887 463h1v1h-1zM887 472h1v1h-1zM887 481h1v1h-1zM887 490h1v1h-1zM887 499h1v1h-1zM887 503h1v1h-1zM887 504h1v1h-1zM903 158h1v1h-1zM903 200h1v1h-1zM903 244h1v1h-1zM903 288h1v1h-1zM903 376h1v1h-1zM903 420h1v1h-1zM903 463h1v1h-1zM903 504h1v1h-1zM919 158h1v1h-1zM919 200h1v1h-1zM919 244h1v1h-1zM919 288h1v1h-1zM919 376h1v1h-1zM919 420h1v1h-1zM919 463h1v1h-1zM919 504h1v1h-1zM935 158h1v1h-1zM935 200h1v1h-1zM935 244h1v1h-1zM935 288h1v1h-1zM935 376h1v1h-1zM935 420h1v1h-1zM935 463h1v1h-1zM935 504h1v1h-1zM952 158h1v1h-1zM952 200h1v1h-1zM952 244h1v1h-1zM952 288h1v1h-1zM952 376h1v1h-1zM952 420h1v1h-1zM952 463h1v1h-1zM952 504h1v1h-1zM968 158h1v1h-1zM968 159h1v1h-1zM968 165h1v1h-1zM968 174h1v1h-1zM968 182h1v1h-1zM968 191h1v1h-1zM968 200h1v1h-1zM968 209h1v1h-1zM968 217h1v1h-1zM968 226h1v1h-1zM968 235h1v1h-1zM968 244h1v1h-1zM968 253h1v1h-1zM968 261h1v1h-1zM968 270h1v1h-1zM968 279h1v1h-1zM968 288h1v1h-1zM968 297h1v1h-1zM968 305h1v1h-1zM968 314h1v1h-1zM968 323h1v1h-1zM968 332h1v1h-1zM968 340h1v1h-1zM968 349h1v1h-1zM968 358h1v1h-1zM968 367h1v1h-1zM968 376h1v1h-1zM968 384h1v1h-1zM968 393h1v1h-1zM968 402h1v1h-1zM968 411h1v1h-1zM968 420h1v1h-1zM968 428h1v1h-1zM968 437h1v1h-1zM968 446h1v1h-1zM968 455h1v1h-1zM968 463h1v1h-1zM968 472h1v1h-1zM968 481h1v1h-1zM968 490h1v1h-1zM968 499h1v1h-1zM968 503h1v1h-1zM968 504h1v1h-1zM984 158h1v1h-1zM984 200h1v1h-1zM984 244h1v1h-1zM984 288h1v1h-1zM984 376h1v1h-1zM984 420h1v1h-1zM984 463h1v1h-1zM984 504h1v1h-1zM1000 158h1v1h-1zM1000 200h1v1h-1zM1000 244h1v1h-1zM1000 288h1v1h-1zM1000 376h1v1h-1zM1000 420h1v1h-1zM1000 463h1v1h-1zM1000 504h1v1h-1zM1017 158h1v1h-1zM1017 200h1v1h-1zM1017 244h1v1h-1zM1017 288h1v1h-1zM1017 376h1v1h-1zM1017 420h1v1h-1zM1017 463h1v1h-1zM1017 504h1v1h-1zM1033 158h1v1h-1zM1033 200h1v1h-1zM1033 244h1v1h-1zM1033 288h1v1h-1zM1033 376h1v1h-1zM1033 420h1v1h-1zM1033 463h1v1h-1zM1033 504h1v1h-1zM1046 200h1v1h-1zM1046 244h1v1h-1zM1046 288h1v1h-1zM1046 332h1v1h-1zM1046 376h1v1h-1zM1046 420h1v1h-1zM1046 463h1v1h-1zM1047 165h1v1h-1zM1047 174h1v1h-1zM1047 182h1v1h-1zM1047 191h1v1h-1zM1047 200h1v1h-1zM1047 209h1v1h-1zM1047 217h1v1h-1zM1047 226h1v1h-1zM1047 235h1v1h-1zM1047 244h1v1h-1zM1047 253h1v1h-1zM1047 261h1v1h-1zM1047 270h1v1h-1zM1047 279h1v1h-1zM1047 288h1v1h-1zM1047 297h1v1h-1zM1047 305h1v1h-1zM1047 314h1v1h-1zM1047 323h1v1h-1zM1047 332h1v1h-1zM1047 340h1v1h-1zM1047 349h1v1h-1zM1047 358h1v1h-1zM1047 367h1v1h-1zM1047 376h1v1h-1zM1047 384h1v1h-1zM1047 393h1v1h-1zM1047 402h1v1h-1zM1047 411h1v1h-1zM1047 420h1v1h-1zM1047 428h1v1h-1zM1047 437h1v1h-1zM1047 446h1v1h-1zM1047 455h1v1h-1zM1047 463h1v1h-1zM1047 472h1v1h-1zM1047 481h1v1h-1zM1047 490h1v1h-1zM1047 499h1v1h-1z" fill="#d8d8d8"/><path d="M643 157h1v349h-1zM238 332h811v1h-811zM640 165h7v1h-7zM640 174h7v1h-7zM640 182h7v1h-7zM640 191h7v1h-7zM640 200h7v1h-7zM640 209h7v1h-7zM640 217h7v1h-7zM640 226h7v1h-7zM640 235h7v1h-7zM640 244h7v1h-7zM640 253h7v1h-7zM640 261h7v1h-7zM640 270h7v1h-7zM640 279h7v1h-7zM640 288h7v1h-7zM640 297h7v1h-7zM640 305h7v1h-7zM640 314h7v1h-7zM640 323h7v1h-7zM640 332h7v1h-7zM640 340h7v1h-7zM640 349h7v1h-7zM640 358h7v1h-7zM640 367h7v1h-7zM640 376h7v1h-7zM640 384h7v1h-7zM640 393h7v1h-7zM640 402h7v1h-7zM640 411h7v1h-7zM640 420h7v1h-7zM640 428h7v1h-7zM640 437h7v1h-7zM640 446h7v1h-7zM640 455h7v1h-7zM640 463h7v1h-7zM640 472h7v1h-7zM640 481h7v1h-7zM640 490h7v1h-7zM640 499h7v1h-7zM253 329h1v7h-1zM269 329h1v7h-1zM286 329h1v7h-1zM302 329h1v7h-1zM318 329h1v7h-1zM334 329h1v7h-1zM351 329h1v7h-1zM367 329h1v7h-1zM383 329h1v7h-1zM399 329h1v7h-1zM416 329h1v7h-1zM432 329h1v7h-1zM448 329h1v7h-1zM464 329h1v7h-1zM481 329h1v7h-1zM497 329h1v7h-1zM513 329h1v7h-1zM529 329h1v7h-1zM546 329h1v7h-1zM562 329h1v7h-1zM578 329h1v7h-1zM594 329h1v7h-1zM611 329h1v7h-1zM627 329h1v7h-1zM643 329h1v7h-1zM659 329h1v7h-1zM675 329h1v7h-1zM692 329h1v7h-1zM708 329h1v7h-1zM724 329h1v7h-1zM740 329h1v7h-1zM757 329h1v7h-1zM773 329h1v7h-1zM789 329h1v7h-1zM805 329h1v7h-1zM822 329h1v7h-1zM838 329h1v7h-1zM854 329h1v7h-1zM870 329h1v7h-1zM887 329h1v7h-1zM903 329h1v7h-1zM919 329h1v7h-1zM935 329h1v7h-1zM952 329h1v7h-1zM968 329h1v7h-1zM984 329h1v7h-1zM1000 329h1v7h-1zM1017 329h1v7h-1zM1033 329h1v7h-1z" fill="#d4d4d4"/><path d="M236 155H1051V508H236z M238 157V505H1048V157z" fill="#eeeeee" fill-rule="evenodd"/><path d="M238 157h810v1h-810z M238 157v348h1v-348z" fill="#a8a8a8" fill-opacity="0.6"/></svg>
<svg class="abs" style="left:0;top:0" width="1280" height="540" viewBox="0 0 1280 540"><path d="M239 332.500H725 M766 332.500H1048" stroke="#d6d268" stroke-width="1" shape-rendering="crispEdges"/><path d="M724.500 332V301H726.200V240L727 234L728 231L729.800 229L733.500 227.500L739.500 226.500L751.500 226L752.500 224.500L758.500 224L759.500 223.500H763.500V249H764.500V303H765.500V332" fill="none" stroke="#d9d85e" stroke-width="1" shape-rendering="crispEdges"/><path d="M239 420.5L242 420.5L243.5 419.5L244.5 419.5L245 420.5L249 420.5L250.5 419.5L250.5 419.5L251 420.5L252 420.5L253.5 419.5L255.5 419.5L256 420.5L257 420.5L258.5 419.5L259.5 419.5L260 420.5L263 420.5L264.5 419.5L264.5 419.5L265 420.5L268 420.5L269.5 419.5L269.5 419.5L270 420.5L271 420.5L272.5 419.5L272.5 419.5L273 420.5L275 420.5L276.5 419.5L277.5 419.5L278 420.5L279 420.5L280.5 419.5L280.5 419.5L281 420.5L282 420.5L283.5 419.5L285.5 419.5L286 420.5L288 420.5L289.5 419.5L289.5 419.5L290 420.5L295 420.5L296.5 419.5L298.5 419.5L299 420.5L303 420.5L304.5 419.5L306.5 419.5L307 420.5L308 420.5L309.5 419.5L311.5 419.5L312 420.5L315 420.5L316.5 419.5L317.5 419.5L318 420.5L319 420.5L320.5 419.5L320.5 419.5L321 420.5L322 420.5L323.5 419.5L325.5 419.5L326 420.5L331 420.5L332.5 419.5L332.5 419.5L333 420.5L336 420.5L337.5 419.5L337.5 419.5L338 420.5L341 420.5L342.5 419.5L343.5 419.5L344 420.5L347 420.5L348.5 419.5L348.5 419.5L349 420.5L350 420.5L351.5 419.5L353.5 419.5L354 420.5L357 420.5L358.5 419.5L358.5 419.5L359 420.5L361 420.5L362.5 419.5L362.5 419.5L363 420.5L366 420.5L367.5 419.5L367.5 419.5L368 420.5L371 420.5L372.5 419.5L372.5 419.5L373 420.5L375 420.5L376.5 419.5L378.5 419.5L379 420.5L381 420.5L382.5 419.5L383.5 419.5L384 420.5L386 420.5L387.5 419.5L389.5 419.5L390 420.5L409 420.5L410.5 419.5L411 420.5L426 420.5L427.5 419.5L428 420.5L430 420.5L431.5 419.5L432.5 419.5L433 420.5L435 420.5L436.5 419.5L438.5 419.5L439 420.5L440 420.5L441.5 419.5L441.5 419.5L442 420.5L445 420.5L446.5 419.5L447.5 419.5L448 420.5L449 420.5L450.5 419.5L451.5 419.5L452 420.5L453 420.5L454.5 419.5L455.5 419.5L456 420.5L458 420.5L459.5 419.5L459.5 419.5L460 420.5L464 420.5L465.5 419.5L465.5 419.5L466 420.5L471 420.5L472.5 419.5L474.5 419.5L475 420.5L478 420.5L479.5 419.5L480.5 419.5L481 420.5L484 420.5L485.5 419.5L486.5 419.5L487 420.5L490 420.5L491.5 419.5L492.5 419.5L493 420.5L494 420.5L495.5 419.5L495.5 419.5L496 420.5L498 420.5L499.5 419.5L500.5 419.5L501 420.5L505 420.5L506.5 419.5L506.5 419.5L507 420.5L508 420.5L509.5 419.5L510.5 419.5L511 420.5L515 420.5L516.5 419.5L518.5 419.5L519 420.5L523 420.5L524.5 419.5L525.5 419.5L526 420.5L530 420.5L531.5 419.5L532.5 419.5L533 420.5L534 420.5L535.5 419.5L536.5 419.5L537 420.5L539 420.5L540.5 419.5L540.5 419.5L541 420.5L544 420.5L545.5 419.5L545.5 419.5L546 420.5L548 420.5L549.5 419.5L549.5 419.5L550 420.5L551 420.5L552.5 419.5L553.5 419.5L554 420.5L555 420.5L556.5 419.5L556.5 419.5L557 420.5L559 420.5L560.5 419.5L561.5 419.5L562 420.5L567 420.5L568.5 419.5L569.5 419.5L570 420.5L572 420.5L573.5 419.5L575.5 419.5L576 420.5L578 420.5L579.5 419.5L579.5 419.5L580 420.5L585 420.5L586.5 419.5L587.5 419.5L588 420.5L593 420.5L594.5 419.5L596.5 419.5L597 420.5L599 420.5L600.5 419.5L601.5 419.5L602 420.5L604 420.5L605.5 419.5L606.5 419.5L607 420.5L608 420.5L609.5 419.5L609.5 419.5L610 420.5L611 420.5L612.5 419.5L612.5 419.5L613 420.5L614 420.5L615.5 419.5L615.5 419.5L616 420.5L620 420.5L621.5 419.5L621.5 419.5L622 420.5L625 420.5L626.5 419.5L626.5 419.5L627 420.5L629 420.5L630.5 419.5L631.5 419.5L632 420.5L633 420.5L634.5 419.5L634.5 419.5L635 420.5L637 420.5L638.5 419.5L640.5 419.5L641 420.5L643 420.5L644.5 419.5L646.5 419.5L647 420.5L650 420.5L651.5 419.5L652.5 419.5L653 420.5L654 420.5L655.5 419.5L657.5 419.5L658 420.5L661 420.5L662.5 419.5L662.5 419.5L663 420.5L665 420.5L666.5 419.5L668.5 419.5L669 420.5L671 420.5L672.5 419.5L673.5 419.5L674 420.5L676 420.5L677.5 419.5L678.5 419.5L679 420.5L680 420.5L681.5 419.5L682.5 419.5L683 420.5L687 420.5L688.5 419.5L689.5 419.5L690 420.5L691 420.5L692.5 419.5L692.5 419.5L693 420.5L694 420.5L695.5 419.5L695.5 419.5L696 420.5L698 420.5L699.5 419.5L701.5 419.5L702 420.5L703 420.5L704.5 419.5L704.5 419.5L705 420.5L706 420.5L707.5 419.5L709.5 419.5L710 420.5L711 420.5L712.5 419.5L714.5 419.5L715 420.5L716 420.5L717.5 419.5L718.5 419.5L719 420.5L722 420.5L723.5 419.5L723.5 419.5L724 420.5L727 420.5L728.5 419.5L729.5 419.5L730 420.5L731 420.5L732.5 419.5L733.5 419.5L734 420.5L736 420.5L737.5 419.5L739.5 419.5L740 420.5L742 420.5L743.5 419.5L744.5 419.5L745 420.5L746 420.5L747.5 419.5L747.5 419.5L748 420.5L753 420.5L754.5 419.5L755.5 419.5L756 420.5L758 420.5L759.5 419.5L760.5 419.5L761 420.5L762 420.5L763.5 419.5L763.5 419.5L764 420.5L768 420.5L769.5 419.5L770.5 419.5L771 420.5L775 420.5L776.5 419.5L777.5 419.5L778 420.5L780 420.5L781.5 419.5L781.5 419.5L782 420.5L785 420.5L786.5 419.5L786.5 419.5L787 420.5L790 420.5L791.5 419.5L792.5 419.5L793 420.5L794 420.5L795.5 419.5L797.5 419.5L798 420.5L799 420.5L800.5 419.5L802.5 419.5L803 420.5L805 420.5L806.5 419.5L806.5 419.5L807 420.5L811 420.5L812.5 419.5L813.5 419.5L814 420.5L817 420.5L818.5 419.5L819.5 419.5L820 420.5L821 420.5L822.5 419.5L823.5 419.5L824 420.5L829 420.5L830.5 419.5L830.5 419.5L831 420.5L834 420.5L835.5 419.5L837.5 419.5L838 420.5L843 420.5L844.5 419.5L846.5 419.5L847 420.5L849 420.5L850.5 419.5L850.5 419.5L851 420.5L854 420.5L855.5 419.5L855.5 419.5L856 420.5L861 420.5L862.5 419.5L862.5 419.5L863 420.5L868 420.5L869.5 419.5L870.5 419.5L871 420.5L886 420.5L887.5 419.5L888 420.5L889 420.5L890.5 419.5L890.5 419.5L891 420.5L896 420.5L897.5 419.5L898.5 419.5L899 420.5L901 420.5L902.5 419.5L903.5 419.5L904 420.5L905 420.5L906.5 419.5L908.5 419.5L909 420.5L911 420.5L912.5 419.5L913.5 419.5L914 420.5L919 420.5L920.5 419.5L921.5 419.5L922 420.5L924 420.5L925.5 419.5L925.5 419.5L926 420.5L927 420.5L928.5 419.5L928.5 419.5L929 420.5L930 420.5L931.5 419.5L932.5 419.5L933 420.5L934 420.5L935.5 419.5L936.5 419.5L937 420.5L938 420.5L939.5 419.5L940.5 419.5L941 420.5L944 420.5L945.5 419.5L947.5 419.5L948 420.5L953 420.5L954.5 419.5L954.5 419.5L955 420.5L957 420.5L958.5 419.5L958.5 419.5L959 420.5L964 420.5L965.5 419.5L965.5 419.5L966 420.5L968 420.5L969.5 419.5L969.5 419.5L970 420.5L972 420.5L973.5 419.5L973.5 419.5L974 420.5L976 420.5L977.5 419.5L978.5 419.5L979 420.5L980 420.5L981.5 419.5L982.5 419.5L983 420.5L985 420.5L986.5 419.5L987.5 419.5L988 420.5L992 420.5L993.5 419.5L993.5 419.5L994 420.5L998 420.5L999.5 419.5L999.5 419.5L1000 420.5L1001 420.5L1002.5 419.5L1002.5 419.5L1003 420.5L1004 420.5L1005.5 419.5L1005.5 419.5L1006 420.5L1009 420.5L1010.5 419.5L1011.5 419.5L1012 420.5L1017 420.5L1018.5 419.5L1018.5 419.5L1019 420.5L1021 420.5L1022.5 419.5L1023.5 419.5L1024 420.5L1025 420.5L1026.5 419.5L1028.5 419.5L1029 420.5L1032 420.5L1033.5 419.5L1033.5 419.5L1034 420.5L1035 420.5L1036.5 419.5L1036.5 419.5L1037 420.5L1042 420.5L1043.5 419.5L1043.5 419.5L1044 420.5L1048 420.5" fill="none" stroke="#26c826" stroke-width="1" shape-rendering="crispEdges"/></svg>
<svg class="abs" style="left:217px;top:211px" width="20" height="15" viewBox="0 0 20 15"><path d="M1 1.500H13L18 7.500 13 13.500H1z" fill="#ffff1e" stroke="#3a3a00" stroke-width="0.600"/></svg>
<svg class="abs" style="left:217px;top:413px" width="20" height="15" viewBox="0 0 20 15"><path d="M1 1.500H13L18 7.500 13 13.500H1z" fill="#1ee61e" stroke="#003a00" stroke-width="0.600"/></svg>
<svg class="abs" style="left:1051px;top:253px" width="20" height="15" viewBox="0 0 20 15"><path d="M18 1.500H6.500L0.800 7.500 6.500 13.500H18z" fill="#ffff1e" stroke="#3a3a00" stroke-width="0.600"/><text x="12" y="11.500" text-anchor="middle" font-family="Liberation Sans,sans-serif" font-size="10.500" fill="#000">T</text></svg>
<div class="abs" style="left:222px;top:212px;width:8px;font-weight:bold;font-size:12px;line-height:15px;color:#000;text-align:center">1</div>
<div class="abs" style="left:222px;top:414px;width:8px;font-weight:bold;font-size:12px;line-height:15px;color:#000;text-align:center">2</div>
<div class="abs sbox" style="left:237px;top:511px;width:92px;height:19px;color:#f0f03c;padding-left:3px;line-height:21px">CH1<span style="position:absolute;left:50px">2.00V</span></div>
<svg class="abs" style="left:266px;top:517px" width="12" height="8" viewBox="0 0 12 8" shape-rendering="crispEdges"><path d="M1 6.500h10" stroke="#f0f03c"/><path d="M1 2.500h10" stroke="#f0f03c" stroke-dasharray="2 2"/></svg>
<div class="abs sbox" style="left:377px;top:511px;width:92px;height:19px;color:#28e028;padding-left:3px;line-height:21px">CH2<span style="position:absolute;left:50px">2.00V</span></div>
<svg class="abs" style="left:407px;top:517px" width="12" height="8" viewBox="0 0 12 8" shape-rendering="crispEdges"><path d="M1 6.500h10" stroke="#28e028"/><path d="M1 2.500h10" stroke="#28e028" stroke-dasharray="2 2"/></svg>
<div class="abs sbox" style="left:840px;top:511px;width:209px;height:19px;color:#f09236;padding-left:3px;line-height:21px">Time: 100.0us<span style="position:absolute;left:100px">Sample Rate: 1MHz</span></div>
<!-- RIGHT PANEL -->
<style>
.rt{font-size:11px;line-height:13px;white-space:nowrap;color:#000}
.rcombo{height:22px;border:1px solid #707070;border-radius:3px;background:linear-gradient(#f3f3f3 0,#ebebeb 48%,#dddddd 52%,#cfcfcf 100%);box-shadow:inset 0 0 0 1px #fcfcfc;font-size:11px;line-height:21px;padding-left:3px;white-space:nowrap;letter-spacing:-0.2px}
.rcombo:after{content:"";position:absolute;right:5px;top:9px;border:4px solid transparent;border-top:4px solid #000;border-bottom:0}
.rdis{border-color:#adb2b5;color:#8a8a8a;background:#f4f4f4}
.rdis:after{border-top-color:#a0a0a0}
.gbx{border:1px solid #d5d5d5;border-radius:3px;box-shadow:inset 1px 1px 0 #fff,1px 1px 0 #fff}
.gbl{background:#f0f0f0;padding:0 2px}
.rcb{width:13px;height:13px;border:1px solid #8e8f8f;background:#f4f4f4;padding:1px}
.rcb:before{content:"";display:block;box-sizing:border-box;width:9px;height:9px;border:1px solid #b4b8bd;background:linear-gradient(135deg,#cfd0d2 0,#e4e5e6 45%,#f8f8f8 100%)}
.sbv{background:linear-gradient(to right,#e6e6e6 0,#f0f0f0 30%,#f4f4f4 100%)}
.thv{border:1px solid #979797;border-radius:2px;background:linear-gradient(to right,#f5f5f5 0,#e9e9eb 48%,#d9dadc 52%,#c6c7ca 100%);box-shadow:inset 0 0 0 1px rgba(255,255,255,.7)}
.thh{border:1px solid #979797;border-radius:2px;background:linear-gradient(#f5f5f5 0,#e9e9eb 48%,#d9dadc 52%,#c6c7ca 100%);box-shadow:inset 0 0 0 1px rgba(255,255,255,.7)}
</style>
<div class="abs" style="left:1075px;top:80px;width:5px;height:460px;background:#f1f3f8"></div>
<div class="abs phead" style="left:1080px;top:80px;width:200px;padding-left:4px;letter-spacing:-0.109px">Control Panel</div>
<svg class="abs" style="left:1248px;top:84px" width="28" height="12" viewBox="0 0 28 12"><path d="M2.500 1.500h4v5h-4zM5.500 1.500v5M1 7h7M4.500 7v4" fill="none" stroke="#000" stroke-width="1.100"/><path d="M18.500 1.500l7.500 8M26 1.500l-7.500 8" stroke="#000" stroke-width="1.700"/></svg>
<div class="abs combo" style="left:1080px;top:100px;width:200px;letter-spacing:-0.3px">Scope</div>
<div class="abs gstrip" style="left:1080px;top:123px;width:200px"></div>
<div id="rpc" class="abs" style="left:1080px;top:147px;width:184px;height:375px;background:#f0f0f0;overflow:hidden">
 <div class="abs gbx" style="left:6px;top:13px;width:200px;height:117px"></div>
 <div class="abs rt gbl" style="left:81px;top:6px">Horizontal</div>
 <div class="abs rt" style="left:15px;top:26px;letter-spacing:-0.542px">Time/DIV</div>
 <div class="abs rcombo" style="left:14px;top:44px;width:74px">100.0us</div>
 <div class="abs rt" style="left:15px;top:76px;letter-spacing:-0.307px">Format</div>
 <div class="abs rcombo" style="left:14px;top:96px;width:74px">Y-T</div>
 <svg class="abs" style="left:107px;top:36px" width="80" height="80" viewBox="-40 -40 80 80">
    <circle r="35.800" fill="#fff" stroke="#111" stroke-width="1"/><circle r="33.300" fill="#b0b0b0"/><path d="M-23.500 23.500A33.300 33.300 0 0 1 23.500 -23.500z" fill="#d2d2d2"/><circle r="33.300" fill="none" stroke="#111" stroke-width="1"/><path d="M-19.500 22.600L-29.500 31.500M25.700 24.200L32.500 31.500" stroke="#000" stroke-width="1.200"/>
  <circle cx="1.3" cy="1.3" r="27.800" fill="#0b0bd0"/><circle cx="1.3" cy="1.3" r="27.800" fill="none" stroke="#05058a" stroke-width="0.800"/>
  <path d="M4.700 -3.600L14.100 -18.300" stroke="#fff" stroke-width="1.600"/>
 </svg>
 <div class="abs gbx" style="left:6px;top:150px;width:200px;height:400px"></div>
 <div class="abs rt gbl" style="left:87px;top:143px">Vertical</div>
 <div class="abs rcb rck" style="left:14px;top:166px"></div>
 <svg class="abs" style="left:14px;top:166px" width="13" height="13" viewBox="0 0 13 13"><path d="M3.500 6.800L5.700 9.700Q7.400 5.500 9.700 2.800" stroke="#43538f" stroke-width="1.800" fill="none" stroke-linecap="round"/></svg>
 <div class="abs rt" style="left:30px;top:167px;letter-spacing:-0.8px">CH1</div>
 <div class="abs rcombo" style="left:14px;top:187px;width:74px">2.00V</div>
 <div class="abs rcombo rdis" style="left:14px;top:222px;width:74px">DC</div>
 <div class="abs rcombo" style="left:14px;top:257px;width:74px">x1</div>
 <svg class="abs" style="left:107px;top:171px" width="80" height="80" viewBox="-40 -40 80 80">
    <circle r="35.800" fill="#fff" stroke="#111" stroke-width="1"/><circle r="33.300" fill="#b0b0b0"/><path d="M-23.500 23.500A33.300 33.300 0 0 1 23.500 -23.500z" fill="#d2d2d2"/><circle r="33.300" fill="none" stroke="#111" stroke-width="1"/><path d="M-19.500 22.600L-29.500 31.500M25.700 24.200L32.500 31.500" stroke="#000" stroke-width="1.200"/>
  <circle cx="1.3" cy="1.3" r="27.800" fill="#ffff14"/><circle cx="1.3" cy="1.3" r="27.800" fill="none" stroke="#8a8a00" stroke-width="0.800"/>
  <path d="M-22 0h17" stroke="#f4f4c8" stroke-width="1.600"/>
 </svg>
 <div class="abs rcb" style="left:125px;top:265px"></div>
 <div class="abs rt" style="left:141px;top:266px">Invert</div>
 <div class="abs rcb rck" style="left:14px;top:307px"></div>
 <svg class="abs" style="left:14px;top:307px" width="13" height="13" viewBox="0 0 13 13"><path d="M3.500 6.800L5.700 9.700Q7.400 5.500 9.700 2.800" stroke="#43538f" stroke-width="1.800" fill="none" stroke-linecap="round"/></svg>
 <div class="abs rt" style="left:30px;top:308px;letter-spacing:-0.8px">CH2</div>
 <div class="abs rcombo" style="left:14px;top:327px;width:74px">2.00V</div>
 <div class="abs rcombo rdis" style="left:14px;top:362px;width:74px">DC</div>
 <svg class="abs" style="left:107px;top:314px" width="80" height="80" viewBox="-40 -40 80 80">
  <circle r="35.800" fill="#fff" stroke="#111" stroke-width="1"/><circle r="33.300" fill="#b0b0b0"/><path d="M-23.500 23.500A33.300 33.300 0 0 1 23.500 -23.500z" fill="#d2d2d2"/><circle r="33.300" fill="none" stroke="#111" stroke-width="1"/>
  <circle cx="1.3" cy="1.3" r="27.800" fill="#14f014"/><circle cx="1.3" cy="1.3" r="27.800" fill="none" stroke="#008a00" stroke-width="0.800"/>
  <path d="M-22 0h17" stroke="#d8f8d8" stroke-width="1.600"/>
 </svg>
</div>
<!-- v scrollbar -->
<div class="abs sbv" style="left:1264px;top:147px;width:16px;height:375px"></div>
<div class="abs thv" style="left:1264px;top:165px;width:15px;height:161px"></div>
<svg class="abs" style="left:1264px;top:147px" width="16" height="375" viewBox="0 0 16 375"><path d="M4 10.800l3.500-4 3.500 4z M4 364.500l3.500 4 3.500-4z" fill="#3a3a3a"/><path d="M5 94.500h6M5 96.500h6M5 98.500h6" stroke="#5a5a5a" stroke-width="1"/></svg>
<!-- h scrollbar -->
<div class="abs" style="left:1079px;top:522px;width:201px;height:17px;background:linear-gradient(#e6e6e6 0,#f0f0f0 30%,#f4f4f4 100%)"></div>
<div class="abs thh" style="left:1098px;top:523px;width:125px;height:15px"></div>
<svg class="abs" style="left:1079px;top:522px" width="185" height="17" viewBox="0 0 185 17"><path d="M12 4.500l-4 4 4 4z M173 4.500l4 4-4 4z" fill="#3a3a3a"/><path d="M78.500 5.500v6M80.500 5.500v6M82.500 5.500v6" stroke="#5a5a5a" stroke-width="1"/></svg>
<div class="abs" style="left:1264px;top:522px;width:16px;height:17px;background:#f0f0f0"></div>
<!-- OUTPUT PANEL -->
<style>.ot{font-size:12px;line-height:16px;white-space:nowrap}</style>
<div class="abs phead" style="left:210px;top:538px;width:1070px;padding-left:5px;padding-top:1px;letter-spacing:0.128px">Output</div>
<svg class="abs" style="left:1265px;top:544px" width="10" height="10" viewBox="0 0 10 10"><path d="M1.500 1.500l7 7M8.500 1.500l-7 7" stroke="#000" stroke-width="1.600"/></svg>
<div class="abs" style="left:210px;top:558px;width:1053px;height:182px;background:#fff;border-left:1px solid #d0d4da;border-bottom:1px solid #9a9a9a"></div>
<div class="abs" style="left:211px;top:558px;width:1052px;height:20px;background:#f0f0f0"></div>
<div class="abs" style="left:211px;top:578px;width:18px;height:152px;background:#f0f0f0"></div>
<div class="abs xb" style="left:215px;top:564px"></div>
<div class="abs ot" style="left:233px;top:560px;font-weight:bold;color:#6d6d6d;letter-spacing:-0.6px">CH1</div>
<div class="abs ot" style="left:233.300px;top:579px;letter-spacing:-0.165px">Period</div><div class="abs ot" style="left:348px;top:579px;letter-spacing:-0.621px">956uS</div>
<div class="abs" style="left:229px;top:596px;width:1034px;height:1px;background:#f0f0f0"></div>
<div class="abs ot" style="left:233.300px;top:598px;letter-spacing:-0.189px">Frequency</div><div class="abs ot" style="left:348px;top:598px;letter-spacing:-0.575px">1.046KHz</div>
<div class="abs" style="left:229px;top:615px;width:1034px;height:1px;background:#f0f0f0"></div>
<div class="abs ot" style="left:233.300px;top:617px;letter-spacing:-0.272px">Rise Time</div><div class="abs ot" style="left:348px;top:617px;letter-spacing:-0.334px">= 3.00uS</div>
<div class="abs" style="left:229px;top:634px;width:1034px;height:1px;background:#f0f0f0"></div>
<div class="abs ot" style="left:233.300px;top:636px;letter-spacing:-0.054px">Fall Time</div><div class="abs ot" style="left:348px;top:636px;letter-spacing:-0.334px">= 1.00uS</div>
<div class="abs" style="left:229px;top:653px;width:1034px;height:1px;background:#f0f0f0"></div>
<div class="abs ot" style="left:233.300px;top:655px;letter-spacing:-0.03px">+ Duty Cycle</div><div class="abs ot" style="left:348px;top:655px;letter-spacing:-0.49px">5.0%</div>
<div class="abs" style="left:229px;top:672px;width:1034px;height:1px;background:#f0f0f0"></div>
<div class="abs ot" style="left:233.300px;top:674px;letter-spacing:-0.012px">- Duty Cycle</div><div class="abs ot" style="left:348px;top:674px;letter-spacing:-0.486px">95.0%</div>
<div class="abs" style="left:229px;top:691px;width:1034px;height:1px;background:#f0f0f0"></div>
<div class="abs ot" style="left:233.300px;top:693px;letter-spacing:-0.06px">+ Pulse Width</div><div class="abs ot" style="left:348px;top:693px;letter-spacing:-0.624px">48.0uS</div>
<div class="abs" style="left:229px;top:710px;width:1034px;height:1px;background:#f0f0f0"></div>
<div class="abs ot" style="left:233.300px;top:712px;letter-spacing:-0.043px">- Pulse Width</div><div class="abs ot" style="left:348px;top:712px;letter-spacing:-0.621px">908uS</div>
<div class="abs" style="left:229px;top:729px;width:1034px;height:1px;background:#f0f0f0"></div>
<div class="abs" style="left:343px;top:578px;width:1px;height:161px;background:#f0f0f0"></div>
<div class="abs sbv" style="left:1263px;top:558px;width:17px;height:182px"></div>
<div class="abs thv" style="left:1264px;top:577px;width:16px;height:115px"></div>
<svg class="abs" style="left:1263px;top:558px" width="17" height="181" viewBox="0 0 17 181"><path d="M5 11.500l3.500-4 3.500 4z M5 170.500l3.500 4 3.500-4z" fill="#3a3a3a"/><path d="M5.500 73.500h6M5.500 75.500h6M5.500 77.500h6M5.500 79.500h6" stroke="#5a5a5a" stroke-width="1"/></svg>
<!-- STATUS -->
<div class="abs" style="left:0;top:740px;width:1280px;height:20px;background:#f0f0f0"></div>
<div class="abs ot" style="left:4px;top:743px">Running...</div>
<div class="abs ot" style="left:1176px;top:743px;letter-spacing:-0.435px">23-03-2016&nbsp; 19:59</div>
<!-- TASKBAR -->
<style>
#taskbar{left:0;top:760px;width:1280px;height:40px;background:linear-gradient(to right,#8597b5 0,#8a9ebd 50px,#a3bbd8 120px,#a9c1de 250px,#a6bedc 1000px,#8ba2c2 1035px,#7f95b3 1070px,#7d92af 1280px);border-top:1px solid #2f3d50;box-shadow:inset 0 1px 0 rgba(255,255,255,.45)}
.tb{top:760px;width:55px;height:40px;border:1px solid rgba(55,70,95,.78);border-radius:3px;background:linear-gradient(135deg,rgba(255,255,255,.5) 0,rgba(255,255,255,.28) 50%,rgba(255,255,255,.12) 100%);box-shadow:inset 0 0 0 1px rgba(255,255,255,.55)}
.tba{background:linear-gradient(135deg,rgba(255,255,255,.8) 0,rgba(255,255,255,.6) 50%,rgba(255,255,255,.45) 100%)}
</style>
<div id="taskbar" class="abs"></div>
<!-- start orb -->
<svg class="abs" style="left:6px;top:760px" width="42" height="40" viewBox="0 0 42 40">
<defs><radialGradient id="orb1" cx="0.5" cy="0.95" r="0.75"><stop offset="0" stop-color="#18e0ff"/><stop offset="0.3" stop-color="#1592d8"/><stop offset="0.65" stop-color="#0c4f92"/><stop offset="1" stop-color="#0a3f7c"/></radialGradient>
<linearGradient id="orb2" x1="0" y1="0" x2="0" y2="1"><stop offset="0" stop-color="#c4d4e2" stop-opacity="0.95"/><stop offset="1" stop-color="#7fa4c8" stop-opacity="0.75"/></linearGradient></defs>
<circle cx="21.100" cy="20.200" r="18.300" fill="url(#orb1)" stroke="#1f3f66" stroke-width="1"/>
<path d="M3.600 18.500a17.500 17.500 0 0 1 35 0c-9 4.500-26 4.500-35 0z" fill="url(#orb2)"/>
<circle cx="21.100" cy="20.200" r="18.900" fill="none" stroke="#c5d6ea" stroke-width="0.700" opacity="0.800"/>
<path d="M13.500 10.200c3-1.600 6-1.500 8.800 0l-1.900 7.800c-2.800-1.500-5.800-1.600-8.800 0z" fill="#f0591e"/>
<path d="M23.200 11c3 1.500 6 1.500 9.300 0l-1.900 7.900c-3.300 1.500-6.300 1.500-9.300 0z" fill="#86c03a"/>
<path d="M11.200 19.500c3-1.600 6-1.500 8.800 0l-2 8c-2.800-1.500-5.800-1.600-8.800 0z" fill="#2f97e6"/>
<path d="M20.900 20.400c3 1.500 6 1.500 9.300 0l-2 8.100c-3.300 1.500-6.300 1.500-9.300 0z" fill="#f9c02c"/>
</svg>
<div class="abs tb" style="left:63px;width:56px;opacity:.8"></div>
<div class="abs tb" style="left:59px;width:55px"></div>
<div class="abs tb" style="left:183px;width:60px"></div>
<div class="abs tb tba" style="left:307px;width:60px"></div>
<div class="abs tb" style="left:369px;width:60px"></div>
<div class="abs tb" style="left:431px;width:60px"></div>
<!-- explorer -->
<svg class="abs" style="left:70px;top:766px" width="33" height="30" viewBox="0 0 33 30">
<path d="M1 4.500q0-1.500 1.500-1.500h7l2 2.500h18q1.500 0 1.500 1.500v19h-30z" fill="#f7dc86" stroke="#d8b64e" stroke-width="0.800"/>
<rect x="3" y="2.500" width="5" height="2" fill="#2fae3a"/><rect x="12" y="4.500" width="4" height="2" fill="#d83a2a"/><rect x="20" y="7" width="4" height="2" fill="#2d86d8"/>
<path d="M14 5.500h14v3h-14z" fill="#fff8e0"/>
<path d="M1 8.500h30v18h-30z" fill="#fbe59a" stroke="#dcbc58" stroke-width="0.600"/>
<path d="M4.500 28.500v-9q0-2.500 2.500-2.500h18q2.500 0 2.500 2.500v9h-6v-6.500h-11v6.500z" fill="#a8d8f4" stroke="#5aa6d8" stroke-width="0.900"/>
</svg>
<!-- wmp -->
<svg class="abs" style="left:136px;top:768px" width="30" height="27" viewBox="0 0 30 27">
<path d="M6 2h19l2 1.500v20l-2 1.500h-19z" fill="#b6d4ee" stroke="#8ab4dc" stroke-width="0.700"/>
<path d="M2.500 1h19v24.500h-19z" fill="#a6caeb" stroke="#7fb0dc" stroke-width="0.800"/>
<circle cx="12" cy="13" r="8.700" fill="#f4841c" stroke="#d86a10" stroke-width="0.800"/><path d="M9 8l8.500 5-8.500 5z" fill="#fff"/>
</svg>
<!-- firefox -->
<svg class="abs" style="left:197px;top:764px" width="32" height="32" viewBox="0 0 32 32">
<defs><radialGradient id="ff1" cx="0.55" cy="0.3" r="0.75"><stop offset="0" stop-color="#3c9be0"/><stop offset="0.6" stop-color="#1c5cb0"/><stop offset="1" stop-color="#123a82"/></radialGradient>
<linearGradient id="ff2" x1="1" y1="0" x2="0.1" y2="1"><stop offset="0" stop-color="#ffe14a"/><stop offset="0.3" stop-color="#fbb020"/><stop offset="0.6" stop-color="#f2781c"/><stop offset="1" stop-color="#d9401c"/></linearGradient></defs>
<circle cx="17.500" cy="13.500" r="11.500" fill="url(#ff1)"/>
<path d="M1 17a15 14.500 0 1 0 30 0a15 14.500 0 1 0 -30 0z M8 13a10 10 0 1 0 20 0a10 10 0 1 0 -20 0z" fill="url(#ff2)" fill-rule="evenodd"/>
<path d="M2.500 8.500c0.500-2 1.500-4 3-5.500 0 1.500 0.500 2.500 1.500 3.500 1.500-1 3-1.500 5-1.500-1.500 1-2.500 2.500-2.500 4 1.500 0 3 0.800 3.500 2-1.500 0-2.500 0.500-3 1.500 2 0.500 4 0 5.500-1-0.500 3-3 5.500-6.500 5.500-4 0-7-3.500-6.500-8.500z" fill="#f0701c"/>
</svg>
<!-- IE -->
<svg class="abs" style="left:258px;top:763px" width="36" height="34" viewBox="0 0 36 34">
<defs><linearGradient id="ie1" x1="0" y1="0" x2="0.3" y2="1"><stop offset="0" stop-color="#8adcf8"/><stop offset="0.5" stop-color="#3bb0ea"/><stop offset="1" stop-color="#1b86d2"/></linearGradient></defs>
<path d="M18.500 4.500c-7.500 0-13 5.500-13 13s5.500 13 13 13c5.500 0 10-3 12-7.500h-6.500c-1.200 1.800-3 2.800-5.500 2.800-3.800 0-6.500-2.500-6.800-6.300h19.600c0.800-8.500-4.800-15-12.800-15zm-6.600 10.500c0.600-3.200 3-5.500 6.600-5.500 3.400 0 5.900 2.200 6.400 5.500z" fill="url(#ie1)" stroke="#2a8ccf" stroke-width="0.500"/>
<path d="M4 30.500c-3-3.500 0-11 6.500-17.500 7-7 16-11.500 21-10.500 3 0.700 3.500 3.500 2 7.500 0.300-2.800-0.800-4.500-3-4.800-4-0.500-11 3-17 9-5.500 5.500-8.500 11.500-7.500 14.500 0.300 1 1 1.700 2 2-1.700 0.500-3.200 0.400-4-0.200z" fill="#f7c92e" stroke="#dca514" stroke-width="0.400"/>
</svg>
<!-- hantek monitor -->
<svg class="abs" style="left:322px;top:765px" width="30" height="31" viewBox="0 0 30 31">
<rect x="1" y="1" width="27.500" height="23" rx="2" fill="#e9e9e9" stroke="#8a8a8a" stroke-width="1"/>
<rect x="3.500" y="3.500" width="22.500" height="16.500" fill="#2b302c"/>
<path d="M3.500 7.500h22.500M3.500 16h22.500" stroke="#4a504a" stroke-width="0.600"/>
<path d="M4 12.500h7l1.500-5 2 10 1.500-7 1 2h8" stroke="#78d834" stroke-width="1.200" fill="none"/>
<rect x="22" y="21.200" width="3.500" height="1.500" fill="#d82a2a"/>
<path d="M12 24h6v3h-6z" fill="#b8b8b8"/><path d="M7 27.500h16v1.500h-16z" fill="#d8d8d8" stroke="#a0a0a0" stroke-width="0.500"/>
</svg>
<!-- paint -->
<svg class="abs" style="left:382px;top:764px" width="34" height="33" viewBox="0 0 34 33">
<path d="M2 20c0-7 7-12 15-12 6 0 10 3 9 7-0.800 3-4 2.500-5.500 4.500-1.500 2 1.500 4-1 6.500-3 3-17.500 3-17.500-6z" fill="#e8f0f8" stroke="#7aa4d0" stroke-width="1"/>
<circle cx="7" cy="20.500" r="2.300" fill="#e8432e"/><circle cx="12" cy="15" r="2.300" fill="#7cc242"/><circle cx="19" cy="13" r="2.300" fill="#f6c834"/><circle cx="14.500" cy="24" r="2.100" fill="#4a9ae0"/>
<path d="M15.500 30.500l10-19.500 2.200 1.200-9.200 19.800z" fill="#e88a2a" stroke="#b8620f" stroke-width="0.500"/>
<path d="M25 11.500l1.500-7c1-2.500 3.500-3 5-3-0.500 2-0.500 4-1 6.500l-3 4.800z" fill="#f0c890" stroke="#b88a50" stroke-width="0.500"/>
</svg>
<!-- photo viewer -->
<svg class="abs" style="left:445px;top:765px" width="32" height="28" viewBox="0 0 32 28">
<defs><linearGradient id="ph1" x1="0" y1="0" x2="0" y2="1"><stop offset="0" stop-color="#6fb4ea"/><stop offset="0.5" stop-color="#d8ecfa"/><stop offset="0.62" stop-color="#5b8a6a"/><stop offset="0.8" stop-color="#3f6f86"/><stop offset="1" stop-color="#7fa6c4"/></linearGradient></defs>
<rect x="2.500" y="2.500" width="27" height="22" fill="url(#ph1)" stroke="#e8eef4" stroke-width="1"/>
<path d="M3 15l6-4 7 3.500 13.500-1.500v4h-26.500z" fill="#4d7d62" opacity="0.850"/>
<path d="M14 7q3-2.500 6 0 4-1 5 1.500h-12q-1-1.500 1-1.500z" fill="#fff" opacity="0.800"/>
<path d="M0.500 0.500h8v3h-5v5h-3zM31.500 0.500v8h-3v-5h-5v-3zM0.500 26.500v-8h3v5h5v3zM31.500 26.500h-8v-3h5v-5h3z" fill="#3a7bd0"/>
</svg>
<!-- tray -->
<svg class="abs" style="left:1040px;top:769.500px" width="145" height="24" viewBox="0 0 145 24">
<path d="M6 14.500l4-4 4 4z" fill="#fff"/>
<path d="M27.500 3v16" stroke="#fff" stroke-width="1.600"/><path d="M28.500 4.500c3-1.500 5 1 8 0.500 2-0.400 3-1 4.500-0.500-0.500 3-2 6-4.500 6.500-3 0.500-5-1.500-8-0.500z" fill="#fff" stroke="#fff" stroke-width="1"/>
<path d="M52 5h9v13h-9z" fill="none" stroke="#fff" stroke-width="1.300"/><path d="M58 4h6v7l-2 2v5h-2v-5l-2-2z" fill="#fff" stroke="#5a6a80" stroke-width="0.500"/><path d="M60 1.500v3M62.500 1.500v3" stroke="#fff" stroke-width="1"/>
<path d="M51 10l7 7M58 10l-7 7" stroke="#e02020" stroke-width="2.200"/>
<path d="M74 16h2.200v2.500h-2.200zM77.300 14h2.200v4.500h-2.200zM80.600 12h2.200v6.500h-2.200zM83.900 10h2.200v8.500h-2.200zM87.200 8h2.200v10.500h-2.200z" fill="#fff" stroke="#55657d" stroke-width="0.400"/>
<path d="M99 9h3l4-4v14l-4-4h-3z" fill="#fff" stroke="#55657d" stroke-width="0.500"/><path d="M108 8.500c1.500 2 1.500 5 0 7M110.500 6.500c2.500 3 2.500 8 0 11" fill="none" stroke="#fff" stroke-width="1.200"/>
<path d="M122 6l6.500-1v6.500h-6.500zM129.500 4.800l8-1.300v8h-8zM122 12.500h6.500v6.500l-6.500-1zM129.500 12.500h8v8l-8-1.300z" fill="#fff"/>
</svg>
<div class="abs" style="left:1196px;top:766px;width:57px;text-align:center;color:#fff;font-size:12px;line-height:14px;white-space:nowrap;letter-spacing:-0.606px">19:59</div>
<div class="abs" style="left:1190px;top:783px;width:69px;text-align:center;color:#fff;font-size:12px;line-height:14px;white-space:nowrap;letter-spacing:-0.306px">23/03/2016</div>
<div class="abs" style="left:1266px;top:761px;width:14px;height:39px;border:1px solid #38424f;background:linear-gradient(to right,#6d7c92,#8a9ab0 50%,#5e6c80);box-shadow:inset 0 0 0 1px rgba(255,255,255,.3)"></div>
</body>
</html>
